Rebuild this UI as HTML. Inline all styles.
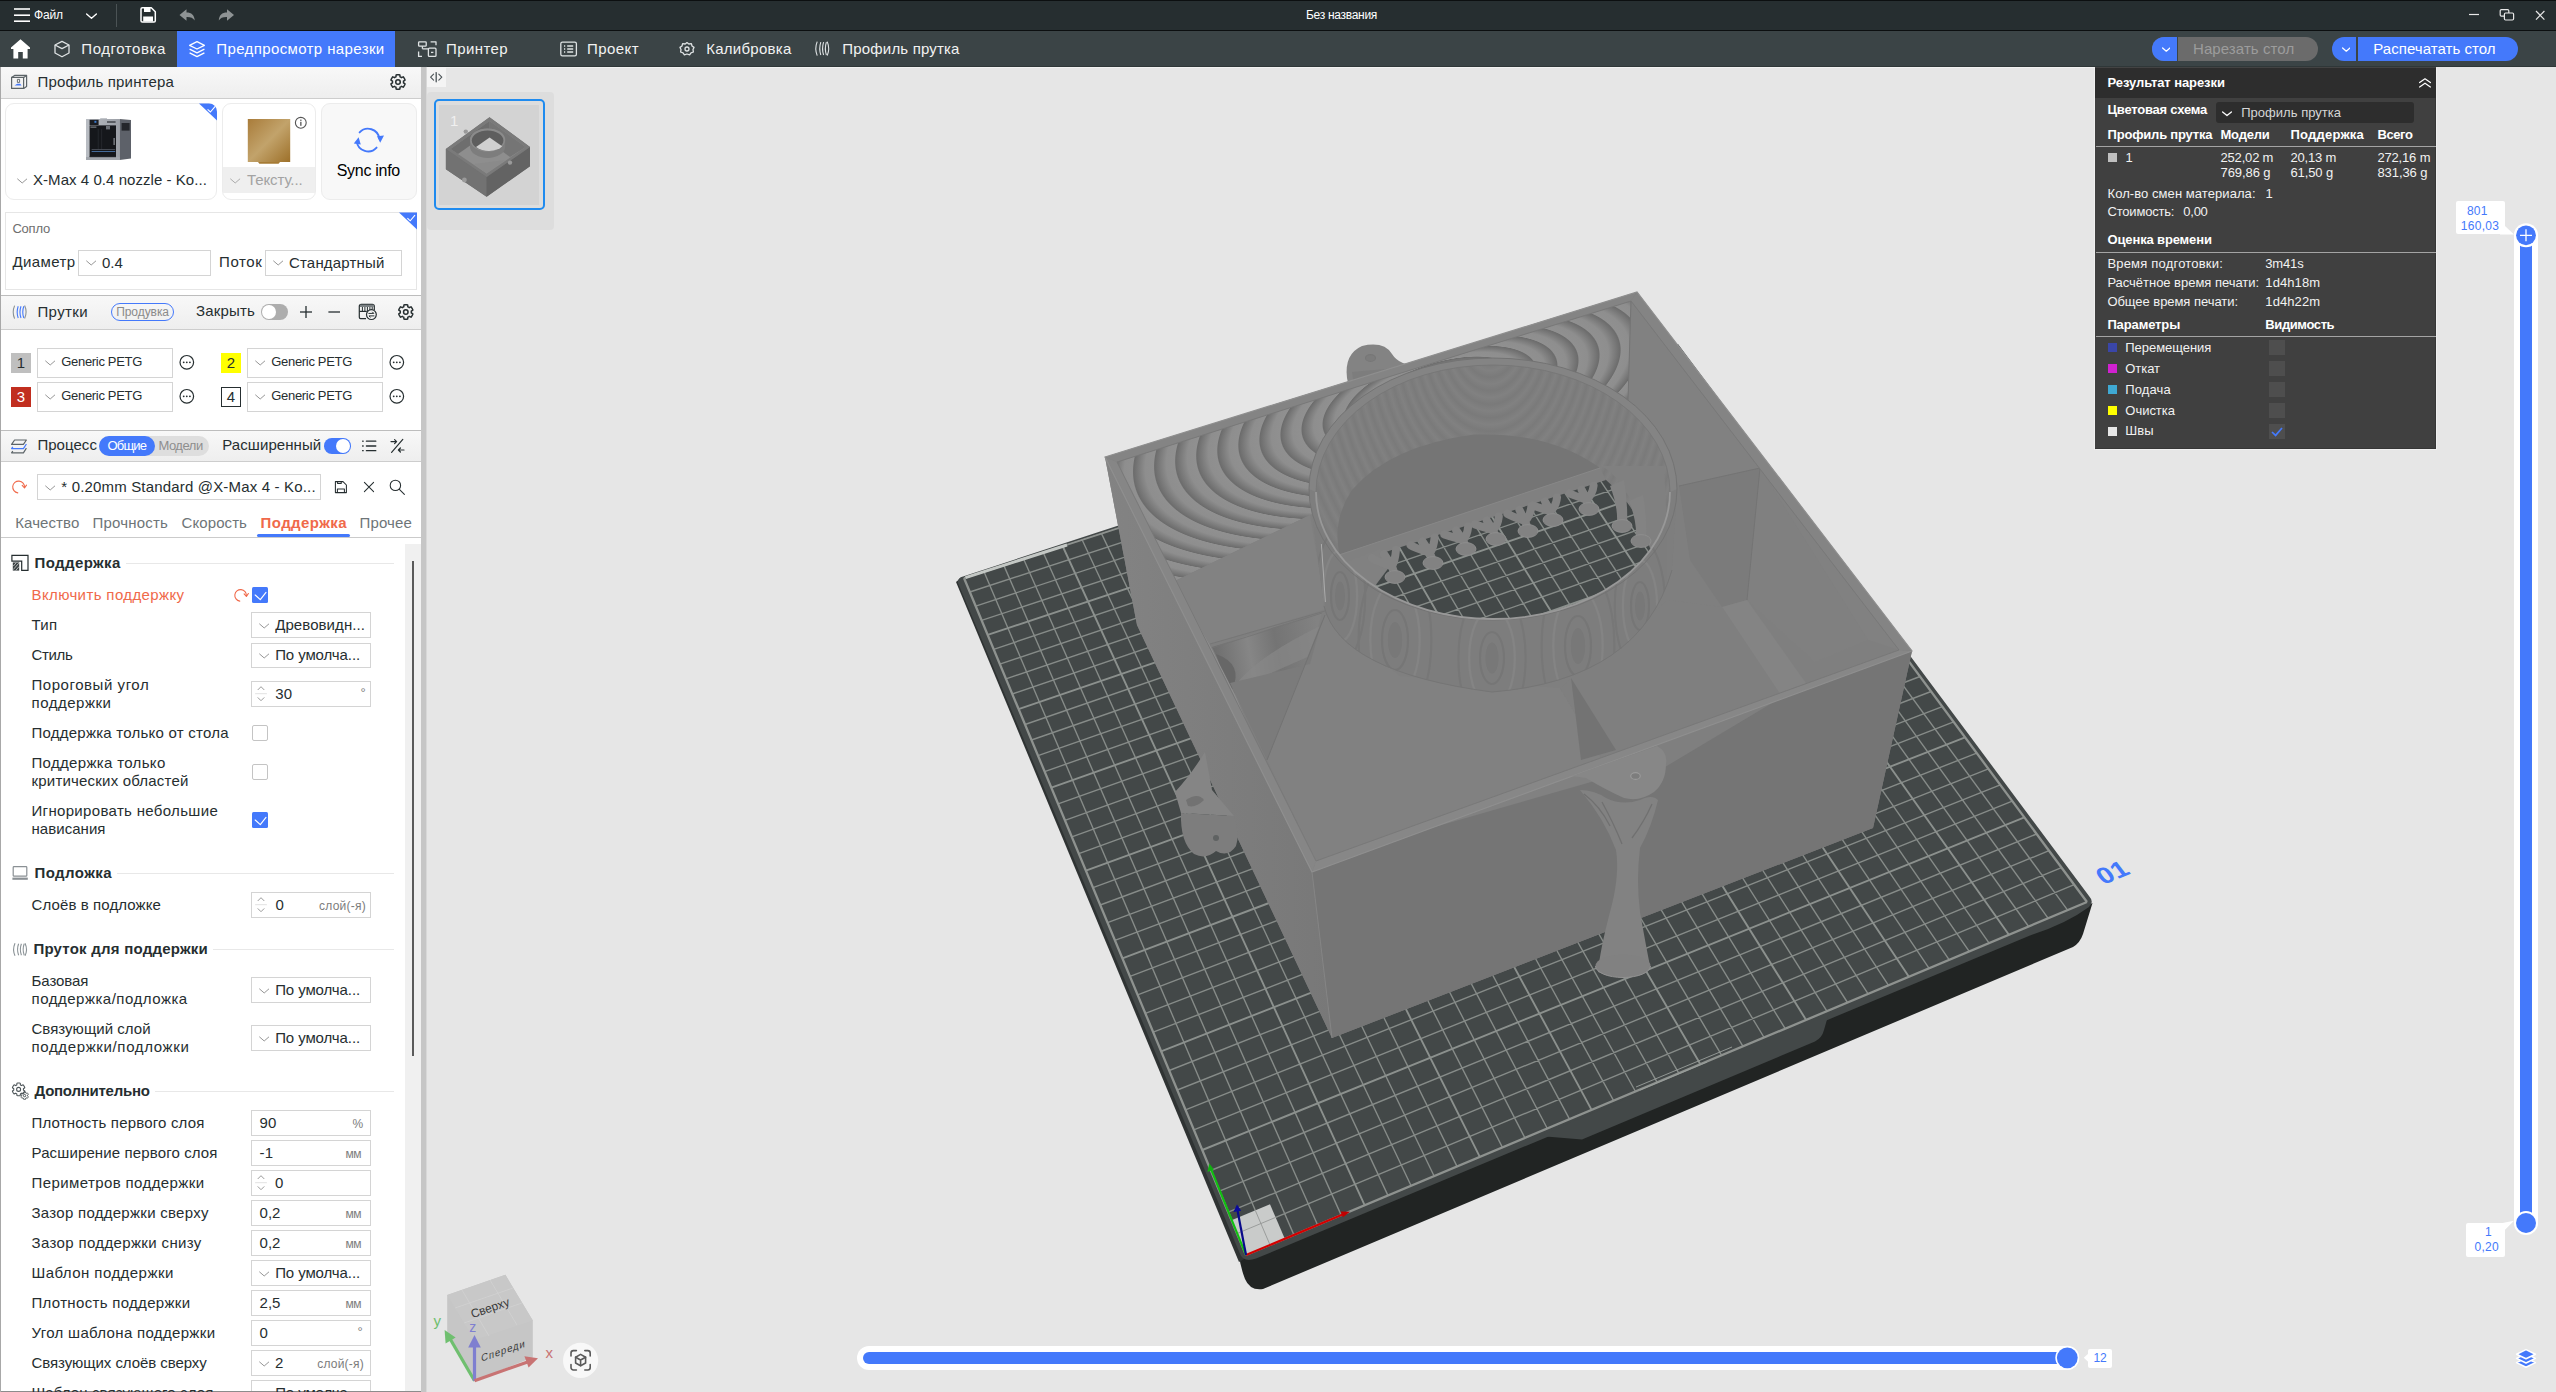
<!DOCTYPE html>
<html lang="ru"><head><meta charset="utf-8"><title>QIDI Studio</title><style>html,body{margin:0;padding:0}body{width:2556px;height:1392px;overflow:hidden;position:relative;background:#e6e6e6;font-family:"Liberation Sans",sans-serif}.a{position:absolute}.t{position:absolute;white-space:nowrap;line-height:1}</style></head><body>
<svg class="a" style="left:0;top:0" width="2556" height="1392" viewBox="0 0 2556 1392"><defs><clipPath id="holeclip"><ellipse cx="1493" cy="492" rx="177" ry="127"/></clipPath><clipPath id="bedclip"><polygon points="958.0,579.0 1241.0,1261.0 2094.0,903.0 1676.0,347.0"/></clipPath><radialGradient id="moire1" cx="0" cy="0" r="9.5" gradientUnits="userSpaceOnUse" spreadMethod="repeat" gradientTransform="translate(1440,395) rotate(-17) scale(2.3,0.95)"><stop offset="0" stop-color="#8e8e8e"/><stop offset="0.55" stop-color="#6c6c6c"/><stop offset="0.6" stop-color="#909090"/><stop offset="1" stop-color="#8e8e8e"/></radialGradient><radialGradient id="moire2" cx="0" cy="0" r="9" gradientUnits="userSpaceOnUse" spreadMethod="repeat" gradientTransform="translate(1490,330) scale(1.0,1.5)"><stop offset="0" stop-color="#848484" stop-opacity="0.5"/><stop offset="0.5" stop-color="#767676" stop-opacity="0.5"/><stop offset="1" stop-color="#848484" stop-opacity="0.5"/></radialGradient><linearGradient id="swirl" x1="1212" y1="660" x2="1320" y2="640" gradientUnits="userSpaceOnUse"><stop offset="0" stop-color="#6c6c6c"/><stop offset="0.35" stop-color="#868686"/><stop offset="0.6" stop-color="#747474"/><stop offset="1" stop-color="#828282"/></linearGradient><linearGradient id="leftface" x1="0" y1="0" x2="1" y2="0"><stop offset="0" stop-color="#838383"/><stop offset="1" stop-color="#787878"/></linearGradient></defs><path d="M1239,1254 Q1240,1266 1245,1279 Q1250,1291 1263,1289 L2073,947 Q2080,943 2083,934 L2092.5,903 L2030,934 Z" fill="#212423"/><path d="M956,582 L1239,1262 L1246,1258 L962,577 Z" fill="#2f3333"/><path d="M958,583 Q957,578 963,576.4 L1120,525 L1678.0,344.0 L2089,896 Q2094.5,902 2089,907 Q2066,924 2030,935.4 L1256,1258.6 Q1243,1263 1239.6,1253 Z" fill="#434848"/><path d="M1540,1136 L1582,1139.6 L1815,1041.4 Q1822,1038 1824,1030 L1828,1016 Q1830,1010 1838,1006 Z" fill="#434848"/><g clip-path="url(#bedclip)"><path d="M1270.0,1244.9L983.9,571.5M1237.0,1233.5L2074.2,884.7M1293.9,1234.9L1003.7,565.1M1228.2,1212.2L2061.5,867.6M1317.6,1225.0L1023.5,558.7M1219.4,1191.2L2049.0,850.7M1341.2,1215.1L1043.1,552.3M1210.8,1170.5L2036.6,834.0M1387.9,1195.4L1082.1,539.7M1193.8,1129.8L2012.3,801.1M1411.1,1185.7L1101.4,533.4M1185.5,1109.8L2000.3,784.9M1434.1,1176.0L1120.7,527.2M1177.3,1090.0L1988.4,768.9M1457.0,1166.4L1139.8,520.9M1169.2,1070.5L1976.7,753.1M1502.4,1147.4L1177.9,508.6M1153.2,1032.2L1953.7,721.9M1524.9,1137.9L1196.8,502.5M1145.4,1013.4L1942.3,706.6M1547.3,1128.5L1215.6,496.4M1137.6,994.8L1931.1,691.5M1569.5,1119.2L1234.4,490.3M1130.0,976.4L1920.0,676.5M1613.6,1100.7L1271.6,478.2M1114.9,940.3L1898.1,646.9M1635.5,1091.5L1290.0,472.2M1107.5,922.6L1887.3,632.4M1657.2,1082.4L1308.4,466.3M1100.2,905.0L1876.7,618.0M1678.9,1073.3L1326.7,460.3M1093.0,887.7L1866.2,603.8M1721.7,1055.3L1363.1,448.5M1078.8,853.6L1845.4,575.7M1743.0,1046.4L1381.2,442.7M1071.8,836.8L1835.2,561.9M1764.1,1037.5L1399.1,436.8M1064.9,820.3L1825.1,548.3M1785.2,1028.7L1417.0,431.0M1058.1,803.9L1815.0,534.8M1826.9,1011.2L1452.6,419.5M1044.6,771.6L1795.3,508.1M1847.5,1002.5L1470.2,413.8M1038.0,755.7L1785.6,495.0M1868.1,993.9L1487.8,408.1M1031.5,740.0L1776.0,482.0M1888.5,985.3L1505.3,402.4M1025.0,724.5L1766.4,469.1M1929.1,968.3L1540.0,391.1M1012.3,694.0L1747.6,443.7M1949.2,959.8L1557.3,385.5M1006.0,678.9L1738.4,431.2M1969.2,951.4L1574.5,379.9M999.8,664.1L1729.2,418.9M1989.1,943.1L1591.6,374.4M993.7,649.3L1720.1,406.6M2028.6,926.5L1625.6,363.4M981.6,620.4L1702.2,382.4M2048.2,918.3L1642.5,357.9M975.7,606.1L1693.4,370.5M2067.6,910.1L1659.3,352.4M969.8,592.0L1684.7,358.7" stroke="#868b88" stroke-width="1.4" fill="none"/><path d="M1364.6,1205.2L1062.6,546.0M1202.3,1150.0L2024.4,817.4M1479.8,1156.9L1158.9,514.8M1161.1,1051.3L1965.1,737.4M1591.6,1109.9L1253.0,484.2M1122.4,958.3L1909.0,661.6M1700.4,1064.3L1345.0,454.4M1085.9,870.6L1855.7,589.7M1806.1,1019.9L1434.8,425.2M1051.3,787.6L1805.1,521.4M1908.9,976.8L1522.7,396.7M1018.6,709.2L1757.0,456.4M2008.9,934.8L1608.6,368.9M987.7,634.8L1711.1,394.4" stroke="#8b908d" stroke-width="1.9" fill="none"/><path d="M1246.0,1255.0L964.0,578.0M1246.0,1255.0L2087.0,902.0M2087.0,902.0L1676.0,347.0M964.0,578.0L1676.0,347.0" stroke="#8e928f" stroke-width="2.3" fill="none"/></g><polygon points="1246.0,1255.0 1284.8,1238.7 1270.0,1204.3 1231.5,1220.3" fill="#c9cbca"/><path d="M1270.0,1244.9L1255.3,1210.4M1237.0,1233.5L1275.6,1217.4" stroke="#8e908f" stroke-width="0.8"/><path d="M965.5,577.6 L1067,545" stroke="#c4c8c5" stroke-width="3"/><path d="M1636,1087 L1732,1047 M1640,1090 L1707,1062" stroke="#9a9f9c" stroke-width="0.9" fill="none"/><line x1="1246" y1="1255" x2="1345" y2="1213.6" stroke="#d40000" stroke-width="2.2"/><polygon points="1350,1211.8 1340.6,1211.4 1343,1217.2" fill="#c00000"/><line x1="1246" y1="1255" x2="1210.6" y2="1168" stroke="#10c010" stroke-width="2"/><polygon points="1209.4,1163.6 1207.4,1172 1213.8,1169.6" fill="#10b010"/><line x1="1246" y1="1255" x2="1237.6" y2="1211" stroke="#0a0a8a" stroke-width="2.2"/><polygon points="1237,1204.6 1233.4,1212 1241.2,1210.8" fill="#0a0a9a"/><text x="0" y="0" font-family="Liberation Sans" font-size="25" font-weight="700" fill="#4479fb" transform="matrix(1.0 -0.42 0.6 0.8 2103.6 885)">01</text><polygon points="1105.0,457.0 1637.0,292.0 1912.0,651.0 1873.0,828.0 1332.0,1038.0 1137.0,625.0" fill="#7e7e7e"/><path d="M1347,378 Q1344,354 1362,346 Q1384,341 1392,354 Q1400,367 1424,366 L1450,372 L1352,402 Z" fill="#838383"/><path d="M1352,372 L1420,366 L1440,376 L1356,398 Z" fill="#777777" opacity="0.5"/><ellipse cx="1370.5" cy="358" rx="5" ry="3.4" fill="#7c7c7c" stroke="#777" stroke-width="1.1"/><polygon points="1105.0,457.0 1312.0,872.0 1332.0,1038.0 1137.0,625.0" fill="url(#leftface)"/><polygon points="1312.0,872.0 1912.0,651.0 1873.0,828.0 1332.0,1038.0" fill="#757575"/><polygon points="1117.0,462.0 1631.0,301.0 1899.0,650.0 1316.0,861.0" fill="#7f7f7f"/><polygon points="1117.0,462.0 1631.0,301.0 1628.0,400.0 1560.0,420.0 1310.0,515.0 1173.0,582.0" fill="#7d7d7d"/><polygon points="1117.0,462.0 1631.0,301.0 1628.0,400.0 1560.0,420.0 1310.0,515.0 1173.0,582.0" fill="url(#moire1)"/><polygon points="1173.0,582.0 1310.0,515.0 1326.0,609.0 1209.0,645.0" fill="#828282"/><polygon points="1212.0,647.0 1322.0,612.0 1308.0,664.0 1234.0,694.0" fill="url(#swirl)"/><path d="M1216,654 Q1244,664 1232,690 L1222,672 Z" fill="#676767"/><path d="M1232,690 Q1250,660 1322,625 L1312,655 Z" fill="#878787" opacity="0.7"/><path d="M1173,582 L1209,645 L1234,694 L1262,760 L1316,861" fill="none" stroke="#8e8e8e" stroke-width="1.4"/><path d="M1210,644 L1325,611 M1212,648 L1322,613" fill="none" stroke="#757575" stroke-width="0.9"/><polygon points="1631.0,301.0 1899.0,650.0 1868.0,640.0 1760.0,468.0 1679.0,486.0 1640.0,420.0 1628.0,400.0" fill="#818181"/><polygon points="1679.0,486.0 1760.0,468.0 1747.0,600.0 1722.0,607.0 1690.0,560.0" fill="#7b7b7b"/><polygon points="1760.0,468.0 1868.0,640.0 1815.0,662.0 1747.0,600.0" fill="#808080"/><polygon points="1722.0,607.0 1747.0,600.0 1808.0,686.0 1782.0,697.0" fill="#848484"/><path d="M1679,486 L1760,468 L1747,600 M1631,301 L1628,400" fill="none" stroke="#747474" stroke-width="1"/><polygon points="1325.0,615.0 1400.0,676.0 1560.0,688.0 1612.0,776.0 1316.0,861.0 1267.0,760.0" fill="#818181"/><polygon points="1230.0,683.0 1310.0,664.0 1322.0,620.0 1267.0,760.0" fill="#7b7b7b"/><path d="M1325,615 L1267,760" stroke="#737373" stroke-width="1" fill="none"/><polygon points="1560.0,688.0 1668.0,600.0 1722.0,607.0 1782.0,697.0 1640.0,782.0 1612.0,776.0" fill="#7f7f7f"/><polygon points="1571.0,678.0 1581.0,760.0 1616.0,750.0" fill="#737373"/><path d="M1309,489 L1324,606 Q1340,672 1492,692 Q1640,680 1672,570 L1677,489 Z" fill="#7e7e7e"/><ellipse cx="1493" cy="489" rx="184" ry="131" fill="#848484"/><ellipse cx="1493" cy="492" rx="177" ry="127" fill="#7e7e7e"/><g clip-path="url(#holeclip)"><ellipse cx="1493" cy="492" rx="177" ry="127" fill="url(#moire2)"/><path d="M1339.5,554.8 Q1332,520 1352,490 Q1390,446 1474,434.6 Q1550,432 1600,468 Z" fill="#757575"/><polygon points="1300,578 1347,563 1605,479 1622,495 1660,550 1700,560 1700,650 1300,650" fill="#434848"/></g><clipPath id="holebed" clip-path="url(#holeclip)"><polygon points="1300,578 1347,563 1605,479 1622,495 1660,550 1700,560 1700,650 1300,650"/></clipPath><g clip-path="url(#holebed)"><path d="M1270.0,1244.9L983.9,571.5M1237.0,1233.5L2074.2,884.7M1293.9,1234.9L1003.7,565.1M1228.2,1212.2L2061.5,867.6M1317.6,1225.0L1023.5,558.7M1219.4,1191.2L2049.0,850.7M1341.2,1215.1L1043.1,552.3M1210.8,1170.5L2036.6,834.0M1387.9,1195.4L1082.1,539.7M1193.8,1129.8L2012.3,801.1M1411.1,1185.7L1101.4,533.4M1185.5,1109.8L2000.3,784.9M1434.1,1176.0L1120.7,527.2M1177.3,1090.0L1988.4,768.9M1457.0,1166.4L1139.8,520.9M1169.2,1070.5L1976.7,753.1M1502.4,1147.4L1177.9,508.6M1153.2,1032.2L1953.7,721.9M1524.9,1137.9L1196.8,502.5M1145.4,1013.4L1942.3,706.6M1547.3,1128.5L1215.6,496.4M1137.6,994.8L1931.1,691.5M1569.5,1119.2L1234.4,490.3M1130.0,976.4L1920.0,676.5M1613.6,1100.7L1271.6,478.2M1114.9,940.3L1898.1,646.9M1635.5,1091.5L1290.0,472.2M1107.5,922.6L1887.3,632.4M1657.2,1082.4L1308.4,466.3M1100.2,905.0L1876.7,618.0M1678.9,1073.3L1326.7,460.3M1093.0,887.7L1866.2,603.8M1721.7,1055.3L1363.1,448.5M1078.8,853.6L1845.4,575.7M1743.0,1046.4L1381.2,442.7M1071.8,836.8L1835.2,561.9M1764.1,1037.5L1399.1,436.8M1064.9,820.3L1825.1,548.3M1785.2,1028.7L1417.0,431.0M1058.1,803.9L1815.0,534.8M1826.9,1011.2L1452.6,419.5M1044.6,771.6L1795.3,508.1M1847.5,1002.5L1470.2,413.8M1038.0,755.7L1785.6,495.0M1868.1,993.9L1487.8,408.1M1031.5,740.0L1776.0,482.0M1888.5,985.3L1505.3,402.4M1025.0,724.5L1766.4,469.1M1929.1,968.3L1540.0,391.1M1012.3,694.0L1747.6,443.7M1949.2,959.8L1557.3,385.5M1006.0,678.9L1738.4,431.2M1969.2,951.4L1574.5,379.9M999.8,664.1L1729.2,418.9M1989.1,943.1L1591.6,374.4M993.7,649.3L1720.1,406.6M2028.6,926.5L1625.6,363.4M981.6,620.4L1702.2,382.4M2048.2,918.3L1642.5,357.9M975.7,606.1L1693.4,370.5M2067.6,910.1L1659.3,352.4M969.8,592.0L1684.7,358.7" stroke="#868b88" stroke-width="1.4" fill="none"/><path d="M1364.6,1205.2L1062.6,546.0M1202.3,1150.0L2024.4,817.4M1479.8,1156.9L1158.9,514.8M1161.1,1051.3L1965.1,737.4M1591.6,1109.9L1253.0,484.2M1122.4,958.3L1909.0,661.6M1700.4,1064.3L1345.0,454.4M1085.9,870.6L1855.7,589.7M1806.1,1019.9L1434.8,425.2M1051.3,787.6L1805.1,521.4M1908.9,976.8L1522.7,396.7M1018.6,709.2L1757.0,456.4M2008.9,934.8L1608.6,368.9M987.7,634.8L1711.1,394.4" stroke="#8b908d" stroke-width="1.9" fill="none"/><path d="M1246.0,1255.0L964.0,578.0M1246.0,1255.0L2087.0,902.0M2087.0,902.0L1676.0,347.0M964.0,578.0L1676.0,347.0" stroke="#8e928f" stroke-width="2.3" fill="none"/></g><g clip-path="url(#holeclip)"><polygon points="1300,568 1339.5,554.8 1600,468 1606,480 1346,565 1300,582" fill="#808080"/><path d="M1339.5,554.8 L1600,468" stroke="#878787" stroke-width="1"/><path d="M1336,566 L1380,549 L1390,566 L1372,590 L1354,598 Z" fill="#818181"/><path d="M1395.0,575.0 L1392.0,566.2 M1392.0,566.2 Q1375.0,560.5 1372.0,557.9 M1392.0,566.2 Q1395.0,561.1 1396.0,550.0 M1392.0,566.2 L1384.0,554.0 M1433.0,561.0 L1430.0,552.8 M1430.0,552.8 Q1413.6,547.5 1410.6,545.3 M1430.0,552.8 Q1433.6,547.9 1434.6,537.5 M1430.0,552.8 L1422.6,541.4 M1466.0,547.0 L1463.0,540.1 M1463.0,540.1 Q1447.2,535.4 1444.2,534.4 M1463.0,540.1 Q1467.2,535.8 1468.2,526.5 M1463.0,540.1 L1456.2,530.4 M1496.0,537.0 L1493.0,530.1 M1493.0,530.1 Q1477.8,525.4 1474.8,524.4 M1493.0,530.1 Q1497.8,525.9 1498.8,516.6 M1493.0,530.1 L1486.8,520.5 M1528.0,529.0 L1525.0,521.0 M1525.0,521.0 Q1510.4,515.8 1507.4,513.8 M1525.0,521.0 Q1530.4,516.2 1531.4,506.0 M1525.0,521.0 L1519.4,509.9 M1553.0,518.0 L1550.0,511.1 M1550.0,511.1 Q1536.0,506.5 1533.0,505.4 M1550.0,511.1 Q1556.0,506.9 1557.0,497.6 M1550.0,511.1 L1545.0,501.5 M1589.0,507.0 L1586.0,499.7 M1586.0,499.7 Q1572.6,494.9 1569.6,493.5 M1586.0,499.7 Q1592.6,495.3 1593.6,485.7 M1586.0,499.7 L1581.6,489.6 " fill="none" stroke="#838383" stroke-width="8" stroke-linecap="round" stroke-linejoin="round"/><ellipse cx="1395.0" cy="577.0" rx="10" ry="6.4" fill="#828282" stroke="#8f8f8f" stroke-width="0.9"/><ellipse cx="1433.0" cy="563.0" rx="10" ry="6.4" fill="#828282" stroke="#8f8f8f" stroke-width="0.9"/><ellipse cx="1466.0" cy="549.0" rx="10" ry="6.4" fill="#828282" stroke="#8f8f8f" stroke-width="0.9"/><ellipse cx="1496.0" cy="539.0" rx="10" ry="6.4" fill="#828282" stroke="#8f8f8f" stroke-width="0.9"/><ellipse cx="1528.0" cy="531.0" rx="10" ry="6.4" fill="#828282" stroke="#8f8f8f" stroke-width="0.9"/><ellipse cx="1553.0" cy="520.0" rx="10" ry="6.4" fill="#828282" stroke="#8f8f8f" stroke-width="0.9"/><ellipse cx="1589.0" cy="509.0" rx="10" ry="6.4" fill="#828282" stroke="#8f8f8f" stroke-width="0.9"/><path d="M1600,466 Q1612,470 1622,486 Q1636,506 1640,522 L1650,548 L1668,548 L1664,466 Z" fill="#808080"/><path d="M1610,486 Q1618,506 1617,523 L1627,523 Q1628,502 1624,480 Z" fill="#838383"/><ellipse cx="1622" cy="526" rx="10" ry="6.4" fill="#828282" stroke="#8e8e8e" stroke-width="0.9"/><path d="M1629,501 Q1637,521 1636,538 L1646,538 Q1647,517 1643,495 Z" fill="#838383"/><ellipse cx="1641" cy="541" rx="10" ry="6.4" fill="#828282" stroke="#8e8e8e" stroke-width="0.9"/></g><path d="M1309,489 L1324,606 Q1340,672 1492,692 Q1640,680 1672,570 L1677,489 L1670,492 A177,127 0 0 1 1316,492 Z" fill="#7e7e7e"/><clipPath id="cylclip"><path d="M1309,489 L1324,606 Q1340,672 1492,692 Q1640,680 1672,570 L1677,489 L1670,492 A177,127 0 0 1 1316,492 Z"/></clipPath><g clip-path="url(#cylclip)" opacity="0.6"><ellipse cx="1395" cy="640" rx="13.0" ry="30.0" fill="none" stroke="#727272" stroke-width="2.2"/><ellipse cx="1395" cy="640" rx="24.7" ry="57.0" fill="none" stroke="#898989" stroke-width="2.2"/><ellipse cx="1395" cy="640" rx="36.4" ry="84.0" fill="none" stroke="#747474" stroke-width="2.2"/><ellipse cx="1395" cy="640" rx="7.2" ry="18.0" fill="#757575"/><ellipse cx="1492" cy="658" rx="12.0" ry="26.0" fill="none" stroke="#727272" stroke-width="2.2"/><ellipse cx="1492" cy="658" rx="22.8" ry="49.4" fill="none" stroke="#898989" stroke-width="2.2"/><ellipse cx="1492" cy="658" rx="33.6" ry="72.8" fill="none" stroke="#747474" stroke-width="2.2"/><ellipse cx="1492" cy="658" rx="6.6" ry="15.6" fill="#757575"/><ellipse cx="1578" cy="646" rx="13.0" ry="30.0" fill="none" stroke="#727272" stroke-width="2.2"/><ellipse cx="1578" cy="646" rx="24.7" ry="57.0" fill="none" stroke="#898989" stroke-width="2.2"/><ellipse cx="1578" cy="646" rx="36.4" ry="84.0" fill="none" stroke="#747474" stroke-width="2.2"/><ellipse cx="1578" cy="646" rx="7.2" ry="18.0" fill="#757575"/><ellipse cx="1340" cy="596" rx="9.0" ry="24.0" fill="none" stroke="#727272" stroke-width="2.2"/><ellipse cx="1340" cy="596" rx="17.1" ry="45.6" fill="none" stroke="#898989" stroke-width="2.2"/><ellipse cx="1340" cy="596" rx="25.2" ry="67.2" fill="none" stroke="#747474" stroke-width="2.2"/><ellipse cx="1340" cy="596" rx="5.0" ry="14.4" fill="#757575"/><ellipse cx="1640" cy="606" rx="9.0" ry="24.0" fill="none" stroke="#727272" stroke-width="2.2"/><ellipse cx="1640" cy="606" rx="17.1" ry="45.6" fill="none" stroke="#898989" stroke-width="2.2"/><ellipse cx="1640" cy="606" rx="25.2" ry="67.2" fill="none" stroke="#747474" stroke-width="2.2"/><ellipse cx="1640" cy="606" rx="5.0" ry="14.4" fill="#757575"/></g><ellipse cx="1493" cy="489" rx="184" ry="131" fill="none" stroke="#737373" stroke-width="1"/><path d="M1316,492 A177,127 0 0 0 1670,492" fill="none" stroke="#989898" stroke-width="1.8"/><path d="M1316,492 A177,127 0 0 1 1670,492" fill="none" stroke="#767676" stroke-width="0.9"/><path d="M1324,606 Q1340,672 1492,692 Q1640,680 1672,570" fill="none" stroke="#757575" stroke-width="1"/><path d="M1321.4,544 L1325.4,602" stroke="#acacac" stroke-width="1"/><polygon points="1312.0,872.0 1912.0,651.0 1899.0,650.0 1316.0,861.0" fill="#878787"/><polygon points="1105.0,457.0 1312.0,872.0 1316.0,861.0 1117.0,462.0" fill="#868686"/><polygon points="1105.0,457.0 1637.0,292.0 1631.0,301.0 1117.0,462.0" fill="#848484"/><polygon points="1637.0,292.0 1912.0,651.0 1899.0,650.0 1631.0,301.0" fill="#848484"/><polygon points="1105.0,457.0 1637.0,292.0 1912.0,651.0 1312.0,872.0" fill="none" stroke="#8f8f8f" stroke-width="1.2"/><polygon points="1117.0,462.0 1631.0,301.0 1899.0,650.0 1316.0,861.0" fill="none" stroke="#777777" stroke-width="0.9"/><path d="M1312,872 L1332,1038" stroke="#858585" stroke-width="1"/><path d="M1572,776 L1657,746 Q1668,752 1666,764 Q1666,782 1654,792 Q1640,802 1624,798 Q1606,790 1586,778 Z" fill="#878787"/><ellipse cx="1635.5" cy="776" rx="4.8" ry="3.4" fill="#7d7d7d" stroke="#9c9c9c" stroke-width="1.1"/><path d="M1580,790 Q1594,790 1606,798 Q1622,806 1640,800 Q1652,794 1658,800 Q1652,826 1640,848 Q1636,880 1640,912 Q1646,946 1650,966 Q1632,984 1598,972 Q1600,950 1610,912 Q1620,876 1616,850 Q1604,818 1580,790 Z" fill="#828282"/><path d="M1584,794 Q1600,806 1610,826 M1652,804 Q1644,822 1632,838 M1602,802 Q1614,824 1622,844" stroke="#707070" stroke-width="1.3" fill="none"/><ellipse cx="1623" cy="966" rx="27.5" ry="11.5" fill="#818181"/><path d="M1595.5,966 A27.5,11.5 0 0 0 1650.5,966" fill="none" stroke="#929292" stroke-width="1"/><path d="M1175,792 Q1190,776 1205,752 L1212,790 L1234,816 L1181,813 Z" fill="#858585"/><path d="M1181,813 L1234,816 Q1240,834 1236,846 Q1228,858 1216,851 Q1206,860 1194,854 Q1180,842 1181,813 Z" fill="#7d7d7d"/><path d="M1186,800 Q1198,792 1204,800 Q1196,808 1188,806 Z" fill="#727272"/><circle cx="1216" cy="838" r="3" fill="#5f6262"/></svg>
<div class="a" style="left:2095px;top:67px;width:341px;height:382px;background:#404040;box-shadow:inset -1px -1px 0 #363636,1px 1px 0 #efefef;"></div><div class="a" style="left:2095px;top:67px;width:341px;height:31px;background:#2d2d2d;"></div><div class="a" style="left:2095px;top:67px;width:341px;height:1px;background:#434343;"></div><div class="a" style="left:427px;top:67px;width:1667px;height:1px;background:#f1f1f1;"></div><div class="a" style="left:2094px;top:67px;width:1px;height:383px;background:#efefef;"></div><svg class="a" style="left:0;top:0;overflow:visible;" width="1" height="1"><g fill="none" stroke="#fff" stroke-width="1.2" stroke-linecap="round" stroke-linejoin="round"><polyline points="2419.6,82.6 2425,78.8 2430.4,82.6"/><polyline points="2419.6,87 2425,83.2 2430.4,87"/></g></svg><div class="a" style="left:2216px;top:102.2px;width:198px;height:20.6px;background:#2d2d2d;border-radius:3px;"></div><svg class="a" style="left:2222.4px;top:111px" width="10" height="6" viewBox="0 0 10 6"><polyline points="0.6,1 5.0,4.6 9.4,1" fill="none" stroke="#fff" stroke-width="1.3" stroke-linecap="round" stroke-linejoin="round"/></svg><div class="a" style="left:2096px;top:146px;width:340px;height:1px;background:#a4a4a4;"></div><div class="a" style="left:2108px;top:153px;width:9px;height:9px;background:#c0c0c0;"></div><div class="a" style="left:2096px;top:252px;width:340px;height:1px;background:#a4a4a4;"></div><div class="a" style="left:2096px;top:336px;width:340px;height:1px;background:#a4a4a4;"></div><div class="a" style="left:2108px;top:343.09999999999997px;width:9px;height:9px;background:#3a46a8;"></div><div class="a" style="left:2269.4px;top:340.09999999999997px;width:15.2px;height:15.2px;background:#4e4e4e;"></div><div class="a" style="left:2108px;top:364.03px;width:9px;height:9px;background:#d121d1;"></div><div class="a" style="left:2269.4px;top:361.03px;width:15.2px;height:15.2px;background:#4e4e4e;"></div><div class="a" style="left:2108px;top:384.96px;width:9px;height:9px;background:#3fa9d3;"></div><div class="a" style="left:2269.4px;top:381.96px;width:15.2px;height:15.2px;background:#4e4e4e;"></div><div class="a" style="left:2108px;top:405.89px;width:9px;height:9px;background:#ffff00;"></div><div class="a" style="left:2269.4px;top:402.89px;width:15.2px;height:15.2px;background:#4e4e4e;"></div><div class="a" style="left:2108px;top:426.81999999999994px;width:9px;height:9px;background:#e6e6e6;"></div><div class="a" style="left:2269.4px;top:423.81999999999994px;width:15.2px;height:15.2px;background:#4e4e4e;"></div><svg class="a" style="left:0;top:0;overflow:visible;" width="1" height="1"><polyline points="2272,432.0 2275.6,435.4 2282,428.0" fill="none" stroke="#4479fb" stroke-width="1.7" stroke-linejoin="miter"/></svg><div class="a" style="left:2514px;top:224px;width:24px;height:1010px;background:#fff;border-radius:12px;"></div><div class="a" style="left:2520px;top:236px;width:12px;height:986px;background:#4479fb;"></div><svg class="a" style="left:0;top:0;overflow:visible;" width="1" height="1"><circle cx="2526" cy="235.3" r="12" fill="#fff"/><circle cx="2526" cy="235.3" r="9.9" fill="#4479fb"/><path d="M2520,235.3 h12 M2526,229.3 v12" stroke="#fff" stroke-width="1.3"/></svg><svg class="a" style="left:0;top:0;overflow:visible;" width="1" height="1"><circle cx="2526" cy="1223" r="12" fill="#fff"/><circle cx="2526" cy="1223" r="10" fill="#4479fb"/></svg><div class="a" style="left:2456px;top:201px;width:49px;height:33.4px;background:#fff;border-radius:2px;"></div><svg class="a" style="left:0;top:0;overflow:visible;" width="1" height="1"><path d="M2500,226 h5 l9,8.4 h-14z" fill="#fff"/></svg><div class="a" style="left:2466px;top:1223.4px;width:39px;height:33.2px;background:#fff;border-radius:2px;"></div><svg class="a" style="left:0;top:0;overflow:visible;" width="1" height="1"><path d="M2500,1223.4 l14,-2.6 l-9,9z" fill="#fff"/></svg><svg class="a" style="left:0;top:0;overflow:visible;" width="1" height="1"><g stroke="#fff" stroke-width="1.6" stroke-linejoin="round" fill="#4479fb"><path d="M2526,1358 l9.4,4.6 l-9.4,4.6 l-9.4,-4.6z"/><path d="M2526,1353.8 l9.4,4.6 l-9.4,4.6 l-9.4,-4.6z"/><path d="M2526,1349.6 l9.4,4.6 l-9.4,4.6 l-9.4,-4.6z"/></g></svg><div class="a" style="left:857px;top:1346px;width:1222px;height:24px;background:#fff;border-radius:12px;"></div><div class="a" style="left:863px;top:1352.2px;width:1205px;height:11.8px;background:#4479fb;border-radius:6px;"></div><svg class="a" style="left:0;top:0;overflow:visible;" width="1" height="1"><circle cx="2067.3" cy="1357.8" r="12" fill="#fff"/><circle cx="2067.3" cy="1357.8" r="10.4" fill="#4479fb"/></svg><div class="a" style="left:2088px;top:1349px;width:24.4px;height:19px;background:#fff;border-radius:2px;"></div><svg class="a" style="left:0;top:0;overflow:visible;" width="1" height="1"><path d="M2088.4,1353.6 l-4.6,4.2 l4.6,4.2z" fill="#fff"/></svg><svg class="a" style="left:0;top:0;overflow:visible;" width="1" height="1"><circle cx="580.6" cy="1360.4" r="17.6" fill="#f8f8f8"/><g fill="none" stroke="#5a5a5a" stroke-width="1.6" stroke-linecap="round" stroke-linejoin="round"><path d="M571,1356 v-3 a2.4,2.4 0 0 1 2.4,-2.4 h3"/><path d="M590.2,1356 v-3 a2.4,2.4 0 0 0 -2.4,-2.4 h-3"/><path d="M571,1364.6 v3 a2.4,2.4 0 0 0 2.4,2.4 h3"/><path d="M590.2,1364.6 v3 a2.4,2.4 0 0 1 -2.4,2.4 h-3"/><path d="M580.6,1354.4 l5,2.8 v5.8 l-5,2.8 l-5,-2.8 v-5.8z"/><path d="M575.6,1357.2 l5,2.8 l5,-2.8 M580.6,1360 v5.8"/></g></svg><svg class="a" style="left:0;top:0;overflow:visible;" width="1" height="1"><polygon points="447.2,1295 505.4,1274.8 532.8,1320.4 532.8,1357.4 474.5,1380.8 447.2,1333" fill="#c6c6c6"/><polygon points="447.2,1295 505.4,1274.8 532.8,1320.4 474.5,1340" fill="#c8c8c8"/><g stroke="#d2d2d2" stroke-width="0.8" fill="none"><path d="M462,1290 l27,46 M490,1280 l27,45 M455,1308 l58,-20 M464,1323 l58,-20"/></g><g stroke-width="3.2" fill="none"><line x1="474.5" y1="1380.8" x2="449" y2="1337" stroke="#6fbf6f"/><line x1="474.5" y1="1380.8" x2="474.5" y2="1346" stroke="#7f7fd0"/><line x1="474.5" y1="1380.8" x2="529" y2="1361.4" stroke="#c87373"/></g><polygon points="444.6,1330 455.6,1337.6 445.6,1343.4" fill="#6fbf6f"/><polygon points="474.5,1335 480.8,1347.6 468.2,1347.6" fill="#7f7fd0"/><polygon points="538,1358.2 528.6,1367.4 524.4,1356.2" fill="#c87373"/></svg><div class="a" style="left:426px;top:67px;width:20px;height:20px;background:#f4f4f4;"></div><svg class="a" style="left:0;top:0;overflow:visible;" width="1" height="1"><g fill="none" stroke="#4a5256" stroke-width="1.1" stroke-linecap="round" stroke-linejoin="round"><polyline points="433.6,74.2 430.6,77.2 433.6,80.2"/><polyline points="438.8,74.2 441.8,77.2 438.8,80.2"/><line x1="436.2" y1="72.6" x2="436.2" y2="81.8" stroke-width="1.3"/></g></svg><div class="a" style="left:427px;top:92px;width:127px;height:138px;background:#dddddd;border-radius:4px;"></div><div class="a" style="left:439px;top:105px;width:100px;height:100px;background:#d3d3d3;"></div><div class="a" style="left:433.6px;top:99.4px;width:111px;height:111px;box-sizing:border-box;border:2px solid #1f8bef;border-radius:5px;"></div><svg class="a" style="left:0;top:0;overflow:visible;" width="1" height="1"><polygon points="489.5,117.3 530,147 530,166.3 486.6,196.8 445.9,169.3 445.9,149" fill="#6c6c6c"/><polygon points="445.9,149 486.6,177 486.6,196.8 445.9,169.3" fill="#727272"/><polygon points="486.6,177 530,147 530,166.3 486.6,196.8" fill="#636363"/><polygon points="489.5,117.3 530,147 486.6,177 445.9,149" fill="#7a7a7a"/><polygon points="489.5,121 525.6,147 486.6,173.6 450.6,149" fill="#8e8e8e"/><polygon points="489.5,121 525.6,147 510,157 489.5,142" fill="#757575"/><polygon points="489.5,121 450.6,149 458,154 489.5,132" fill="#6e6e6e"/><polygon points="474,164 505,160 486.6,173.6" fill="#8a8a8a"/><path d="M470,140 a17.6,11.6 0 0 1 35.2,0 v6.4 a17.6,11.6 0 0 1 -35.2,0z" fill="#7d7d7d"/><ellipse cx="487.6" cy="140" rx="17.6" ry="11.6" fill="#8b8b8b"/><ellipse cx="487.6" cy="140.6" rx="15.8" ry="10" fill="#5e5e5e"/><path d="M476,147 l13.6,-9.4 l12.6,8.6 a15.8,10 0 0 1 -26.2,0.8z" fill="#d0d0d0"/><g fill="#9a9a9a"><circle cx="465.8" cy="131.6" r="2.2"/><circle cx="510" cy="162.6" r="2.2"/><circle cx="464.4" cy="180" r="2.4"/></g></svg>
<div class="a" style="left:0px;top:67px;width:421px;height:1325px;background:#fff;"></div><div class="a" style="left:421px;top:67px;width:6px;height:1325px;background:#c6c6c6;"></div><div class="a" style="left:426px;top:67px;width:1px;height:1325px;background:#d8d8d8;"></div><div class="a" style="left:0px;top:67px;width:421px;height:31px;background:linear-gradient(#f8f8f8,#eeeeee);"></div><div class="a" style="left:0px;top:98px;width:421px;height:1px;background:#cdcdcd;"></div><svg class="a" style="left:0;top:0;overflow:visible;" width="1" height="1"><g fill="none" stroke="#5c6468" stroke-width="1.2" stroke-linejoin="round"><path d="M11.6,77.4 h12 v11 h-12z"/><path d="M11.6,77.4 l3,-2 h12 v11 l-3,2"/><path d="M23.6,77.4 l3,-2"/></g><path d="M14.6,85.6 h7 l-1.4,-1.8 h-3z" fill="#4479fb"/><path d="M17.4,79.4 h2.2 v3 h-2.2z" fill="none" stroke="#5c6468" stroke-width="0.9"/></svg><svg class="a" style="left:0;top:0;overflow:visible" width="1" height="1"><path d="M396.11,74.95 L397.05,74.76 L398.00,74.70 L398.95,74.76 L399.89,74.95 L400.04,76.84 L400.77,77.20 L401.45,77.65 L403.16,76.84 L403.79,77.56 L404.32,78.35 L404.74,79.21 L405.05,80.11 L403.49,81.19 L403.55,82.00 L403.49,82.81 L405.05,83.89 L404.74,84.79 L404.32,85.65 L403.79,86.44 L403.16,87.16 L401.45,86.35 L400.77,86.80 L400.04,87.16 L399.89,89.05 L398.95,89.24 L398.00,89.30 L397.05,89.24 L396.11,89.05 L395.96,87.16 L395.23,86.80 L394.55,86.35 L392.84,87.16 L392.21,86.44 L391.68,85.65 L391.26,84.79 L390.95,83.89 L392.51,82.81 L392.45,82.00 L392.51,81.19 L390.95,80.11 L391.26,79.21 L391.68,78.35 L392.21,77.56 L392.84,76.84 L394.55,77.65 L395.23,77.20 L395.96,76.84Z" fill="none" stroke="#262e30" stroke-width="1.5" stroke-linejoin="round"/><circle cx="398" cy="82" r="2.26" fill="none" stroke="#262e30" stroke-width="1.5"/></svg><div class="a" style="left:5px;top:103px;width:212px;height:97px;box-sizing:border-box;border:1px solid #ececec;border-radius:9px;background:#fff;overflow:hidden;"></div><svg class="a" style="left:0;top:0;overflow:visible;" width="1" height="1"><path d="M199,103.5 h10 a8,8 0 0 1 8,8 v9z" fill="#4479fb"/><polyline points="207.6,109.4 210.4,112 215.2,106.4" fill="none" stroke="#fff" stroke-width="1.1"/></svg><svg class="a" style="left:0;top:0;overflow:visible;" width="1" height="1"><defs><linearGradient id="pfr" x1="0" y1="0" x2="1" y2="0"><stop offset="0" stop-color="#b9bdc3"/><stop offset="1" stop-color="#9a9ea5"/></linearGradient></defs><g><rect x="100.2" y="118" width="6.8" height="1.6" fill="#c3c6cb"/><rect x="86" y="119" width="33.6" height="41" fill="url(#pfr)"/><polygon points="119.6,119 131,120 131,158.6 119.6,160" fill="#5d6169"/><rect x="121.6" y="123" width="8" height="7.6" fill="#24262b"/><rect x="89.6" y="125.4" width="26.4" height="31.6" fill="#15171b"/><rect x="89.6" y="119.8" width="9" height="5.2" fill="#1b1d22"/><rect x="94.4" y="120.8" width="2" height="2" fill="#3a7bd0"/><rect x="107" y="121.4" width="8.6" height="1.2" fill="#2a2d33"/><rect x="90.4" y="126.6" width="6" height="1" fill="#8f939a"/><rect x="106" y="126" width="4" height="3.4" fill="#6c7077"/><rect x="97.8" y="129" width="0.7" height="21" fill="#2b2e34"/><rect x="101.4" y="129" width="0.7" height="21" fill="#2b2e34"/><rect x="113.6" y="138" width="1" height="7" fill="#a4a8ae"/><rect x="91.6" y="149" width="23.6" height="0.9" fill="#4b5058"/><rect x="91.6" y="151" width="23.6" height="0.9" fill="#4a74a8"/><rect x="86" y="157" width="33.6" height="3" fill="#a2a6ac"/><rect x="89.6" y="156.4" width="26.4" height="0.8" fill="#23262b"/></g></svg><svg class="a" style="left:16.6px;top:178px" width="10.4" height="6.4" viewBox="0 0 10.4 6.4"><polyline points="0.6,1 5.2,5.0 9.8,1" fill="none" stroke="#969696" stroke-width="1.0" stroke-linecap="round" stroke-linejoin="round"/></svg><div class="a" style="left:222px;top:103px;width:94px;height:97px;box-sizing:border-box;border:1px solid #ececec;border-radius:9px;background:#fff;"></div><svg class="a" style="left:0;top:0;overflow:visible;" width="1" height="1"><defs><linearGradient id="gold" x1="0" y1="0" x2="1" y2="1"><stop offset="0" stop-color="#a97c3a"/><stop offset="0.5" stop-color="#c2a36b"/><stop offset="1" stop-color="#9d7029"/></linearGradient></defs><rect x="247.8" y="119" width="42.4" height="43" fill="url(#gold)"/><path d="M258,162 h22 l-1.4,1.8 h-19.2z" fill="#a67b35"/></svg><svg class="a" style="left:0;top:0;overflow:visible;" width="1" height="1"><circle cx="300.8" cy="122.8" r="5.4" fill="#fff" stroke="#555" stroke-width="1.1"/><rect x="300.2" y="121.8" width="1.3" height="4" fill="#555"/><rect x="300.2" y="119.6" width="1.3" height="1.3" fill="#555"/></svg><div class="a" style="left:223px;top:167px;width:92px;height:26px;background:#efefef;"></div><svg class="a" style="left:230.4px;top:178px" width="10.4" height="6.4" viewBox="0 0 10.4 6.4"><polyline points="0.6,1 5.2,5.0 9.8,1" fill="none" stroke="#ababab" stroke-width="1.0" stroke-linecap="round" stroke-linejoin="round"/></svg><div class="a" style="left:321px;top:103px;width:96px;height:97px;box-sizing:border-box;border:1px solid #ececec;border-radius:9px;background:#f8f8f8;"></div><svg class="a" style="left:0;top:0;overflow:visible;" width="1" height="1"><g fill="none" stroke="#4479fb" stroke-width="1.9" stroke-linecap="round"><path d="M359.6,132.4 A11.4,11.4 0 0 1 379.3,138.6"/><path d="M376.6,147.6 A11.4,11.4 0 0 1 356.8,141.6"/></g><path d="M380.2,142.8 L377,136.2 L384,135.4 Z" fill="#4479fb"/><path d="M358.6,137.2 L353.8,143.6 L360.8,144.4 Z" fill="#4479fb"/></svg><div class="a" style="left:5px;top:212px;width:412px;height:78px;box-sizing:border-box;border:1px solid #e6e6e6;background:#fff;"></div><svg class="a" style="left:0;top:0;overflow:visible;" width="1" height="1"><path d="M399,212.5 h18 v17z" fill="#4479fb"/><polyline points="407.4,218.2 410.2,220.8 415,215.2" fill="none" stroke="#fff" stroke-width="1.1"/></svg><div class="a" style="left:78px;top:250px;width:133px;height:26px;box-sizing:border-box;border:1px solid #d4d4d4;background:#fff;"></div><svg class="a" style="left:86px;top:260.4px" width="10.4" height="6.4" viewBox="0 0 10.4 6.4"><polyline points="0.6,1 5.2,5.0 9.8,1" fill="none" stroke="#969696" stroke-width="1.0" stroke-linecap="round" stroke-linejoin="round"/></svg><div class="a" style="left:265px;top:250px;width:137px;height:26px;box-sizing:border-box;border:1px solid #d4d4d4;background:#fff;"></div><svg class="a" style="left:272.6px;top:260.4px" width="10.4" height="6.4" viewBox="0 0 10.4 6.4"><polyline points="0.6,1 5.2,5.0 9.8,1" fill="none" stroke="#969696" stroke-width="1.0" stroke-linecap="round" stroke-linejoin="round"/></svg><div class="a" style="left:0px;top:295px;width:421px;height:1px;background:#bdbdbd;"></div><div class="a" style="left:0px;top:296px;width:421px;height:33px;background:linear-gradient(#f8f8f8,#eeeeee);"></div><div class="a" style="left:0px;top:329px;width:421px;height:1px;background:#cdcdcd;"></div><svg class="a" style="left:0;top:0;overflow:visible;" width="1" height="1"><path d="M14.600000000000001,305.6 Q11.8,312.1 14.600000000000001,318.6" fill="none" stroke="#8a9296" stroke-width="1.1"/><path d="M18.2,306.20000000000005 Q16.1,312.1 18.2,318.0" fill="none" stroke="#4479fb" stroke-width="1.1"/><path d="M21.0,306.20000000000005 Q18.900000000000002,312.1 21.0,318.0" fill="none" stroke="#4479fb" stroke-width="1.1"/><path d="M23.8,306.20000000000005 Q21.700000000000003,312.1 23.8,318.0" fill="none" stroke="#4479fb" stroke-width="1.1"/><path d="M24.6,305.6 Q27.6,312.1 24.6,318.6" fill="none" stroke="#8a9296" stroke-width="1.1"/></svg><div class="a" style="left:111px;top:303px;width:63px;height:18.4px;box-sizing:border-box;border:1.3px solid #4479fb;border-radius:9.2px;"></div><div class="a" style="left:261px;top:304px;width:27px;height:15.8px;border-radius:7.9px;background:#adadad;"></div><div class="a" style="left:262px;top:305px;width:13.8px;height:13.8px;border-radius:50%;background:#fff;"></div><svg class="a" style="left:0;top:0;overflow:visible;" width="1" height="1"><g stroke="#262e30" stroke-width="1.3"><line x1="300" y1="312" x2="312" y2="312"/><line x1="306" y1="306" x2="306" y2="318"/><line x1="328.4" y1="312" x2="340" y2="312"/></g></svg><svg class="a" style="left:0;top:0;overflow:visible;" width="1" height="1"><g fill="none" stroke="#262e30" stroke-width="1.2" stroke-linejoin="round"><path d="M366,318.6 h-5.4 a1.3,1.3 0 0 1 -1.3,-1.3 v-11 a2,2 0 0 1 2,-2 h11 a2,2 0 0 1 2,2 v3.6"/><path d="M359.4,311.4 h7.4"/></g><rect x="360" y="304.6" width="13.8" height="2.4" fill="#7a8083"/><g stroke="#262e30" stroke-width="1"><path d="M362.4,307 v4 M364.9,307 v4 M367.4,307 v4 M369.9,307 v3 M372.2,307 v2.6"/></g><circle cx="371.4" cy="314.6" r="4.9" fill="#f6f6f6" stroke="#262e30" stroke-width="1.2"/><g fill="none" stroke="#262e30" stroke-width="1" stroke-linecap="round" stroke-linejoin="round"><path d="M368.8,313.4 h5 l-1.3,-1.3 M374,315.9 h-5 l1.3,1.3"/></g></svg><svg class="a" style="left:0;top:0;overflow:visible" width="1" height="1"><path d="M403.91,304.95 L404.85,304.76 L405.80,304.70 L406.75,304.76 L407.69,304.95 L407.84,306.84 L408.57,307.20 L409.25,307.65 L410.96,306.84 L411.59,307.56 L412.12,308.35 L412.54,309.21 L412.85,310.11 L411.29,311.19 L411.35,312.00 L411.29,312.81 L412.85,313.89 L412.54,314.79 L412.12,315.65 L411.59,316.44 L410.96,317.16 L409.25,316.35 L408.57,316.80 L407.84,317.16 L407.69,319.05 L406.75,319.24 L405.80,319.30 L404.85,319.24 L403.91,319.05 L403.76,317.16 L403.03,316.80 L402.35,316.35 L400.64,317.16 L400.01,316.44 L399.48,315.65 L399.06,314.79 L398.75,313.89 L400.31,312.81 L400.25,312.00 L400.31,311.19 L398.75,310.11 L399.06,309.21 L399.48,308.35 L400.01,307.56 L400.64,306.84 L402.35,307.65 L403.03,307.20 L403.76,306.84Z" fill="none" stroke="#262e30" stroke-width="1.5" stroke-linejoin="round"/><circle cx="405.8" cy="312" r="2.26" fill="none" stroke="#262e30" stroke-width="1.5"/></svg><div class="a" style="left:11px;top:353px;width:20px;height:20px;background:#bfbfbf;"></div><div class="a" style="left:37px;top:348px;width:136px;height:30px;box-sizing:border-box;border:1px solid #d4d4d4;background:#fff;"></div><svg class="a" style="left:44.5px;top:359.7px" width="10.4" height="6.4" viewBox="0 0 10.4 6.4"><polyline points="0.6,1 5.2,5.0 9.8,1" fill="none" stroke="#969696" stroke-width="1.0" stroke-linecap="round" stroke-linejoin="round"/></svg><svg class="a" style="left:0;top:0;overflow:visible;" width="1" height="1"><circle cx="186.8" cy="362.3" r="6.8" fill="none" stroke="#262e30" stroke-width="1.2"/><g fill="#262e30"><circle cx="183.7" cy="362.3" r="0.9"/><circle cx="186.8" cy="362.3" r="0.9"/><circle cx="189.9" cy="362.3" r="0.9"/></g></svg><div class="a" style="left:221px;top:353px;width:20px;height:20px;background:#ffff00;"></div><div class="a" style="left:247px;top:348px;width:136px;height:30px;box-sizing:border-box;border:1px solid #d4d4d4;background:#fff;"></div><svg class="a" style="left:254.5px;top:359.7px" width="10.4" height="6.4" viewBox="0 0 10.4 6.4"><polyline points="0.6,1 5.2,5.0 9.8,1" fill="none" stroke="#969696" stroke-width="1.0" stroke-linecap="round" stroke-linejoin="round"/></svg><svg class="a" style="left:0;top:0;overflow:visible;" width="1" height="1"><circle cx="396.8" cy="362.3" r="6.8" fill="none" stroke="#262e30" stroke-width="1.2"/><g fill="#262e30"><circle cx="393.7" cy="362.3" r="0.9"/><circle cx="396.8" cy="362.3" r="0.9"/><circle cx="399.9" cy="362.3" r="0.9"/></g></svg><div class="a" style="left:11px;top:387px;width:20px;height:20px;background:#c12e1f;"></div><div class="a" style="left:37px;top:382px;width:136px;height:30px;box-sizing:border-box;border:1px solid #d4d4d4;background:#fff;"></div><svg class="a" style="left:44.5px;top:393.7px" width="10.4" height="6.4" viewBox="0 0 10.4 6.4"><polyline points="0.6,1 5.2,5.0 9.8,1" fill="none" stroke="#969696" stroke-width="1.0" stroke-linecap="round" stroke-linejoin="round"/></svg><svg class="a" style="left:0;top:0;overflow:visible;" width="1" height="1"><circle cx="186.8" cy="396.3" r="6.8" fill="none" stroke="#262e30" stroke-width="1.2"/><g fill="#262e30"><circle cx="183.7" cy="396.3" r="0.9"/><circle cx="186.8" cy="396.3" r="0.9"/><circle cx="189.9" cy="396.3" r="0.9"/></g></svg><div class="a" style="left:221px;top:387px;width:20px;height:20px;background:#fff;box-sizing:border-box;border:1px solid #262e30;"></div><div class="a" style="left:247px;top:382px;width:136px;height:30px;box-sizing:border-box;border:1px solid #d4d4d4;background:#fff;"></div><svg class="a" style="left:254.5px;top:393.7px" width="10.4" height="6.4" viewBox="0 0 10.4 6.4"><polyline points="0.6,1 5.2,5.0 9.8,1" fill="none" stroke="#969696" stroke-width="1.0" stroke-linecap="round" stroke-linejoin="round"/></svg><svg class="a" style="left:0;top:0;overflow:visible;" width="1" height="1"><circle cx="396.8" cy="396.3" r="6.8" fill="none" stroke="#262e30" stroke-width="1.2"/><g fill="#262e30"><circle cx="393.7" cy="396.3" r="0.9"/><circle cx="396.8" cy="396.3" r="0.9"/><circle cx="399.9" cy="396.3" r="0.9"/></g></svg><div class="a" style="left:0px;top:430px;width:421px;height:1px;background:#bdbdbd;"></div><div class="a" style="left:0px;top:431px;width:421px;height:30px;background:linear-gradient(#f8f8f8,#eeeeee);"></div><div class="a" style="left:0px;top:461px;width:421px;height:1px;background:#cdcdcd;"></div><svg class="a" style="left:0;top:0;overflow:visible;" width="1" height="1"><g fill="none" stroke="#5c6468" stroke-width="1.2" stroke-linejoin="round"><path d="M14.6,440 h11.8 l-3,4.4 h-11.8z"/><path d="M26.4,444 l-3,4.6 h-11.8 l1.2,-1.8" stroke="#4479fb"/><path d="M26.4,448.2 l-3,4.6 h-11.8 l1.2,-1.8"/></g></svg><div class="a" style="left:99px;top:435.6px;width:110px;height:20.8px;border-radius:10.4px;background:#dedede;"></div><div class="a" style="left:99px;top:435.6px;width:56.4px;height:20.8px;border-radius:10.4px;background:#4479fb;"></div><div class="a" style="left:324px;top:438px;width:27px;height:15.6px;border-radius:7.8px;background:#4479fb;"></div><div class="a" style="left:336.2px;top:438.9px;width:14px;height:14px;border-radius:50%;background:#fff;"></div><svg class="a" style="left:0;top:0;overflow:visible;" width="1" height="1"><g stroke="#262e30" stroke-width="1.3" stroke-linecap="round"><path d="M366.4,441.2 h9.4 M366.4,446 h9.4 M366.4,450.7 h9.4"/><path d="M362.6,441.2 h0.6 M362.6,446 h0.6 M362.6,450.7 h0.6"/></g></svg><svg class="a" style="left:0;top:0;overflow:visible;" width="1" height="1"><g fill="none" stroke="#262e30" stroke-width="1.2" stroke-linecap="round" stroke-linejoin="round"><path d="M391.6,452.4 l11.2,-13"/><path d="M391,441.6 h5.6 l-2,-2 M396.6,441.6 l-2,2"/><path d="M404,450 h-5.6 l2,-2 M398.4,450 l2,2"/></g></svg><svg class="a" style="left:0;top:0;overflow:visible" width="1" height="1"><g fill="none" stroke="#f0694a" stroke-width="1.1" stroke-linecap="round" stroke-linejoin="round"><path d="M17.78,492.84 A5.9,5.9 0 1 1 24.50,487.40"/><polyline points="22.20,485.40 24.50,488.00 26.50,485.10"/></g></svg><div class="a" style="left:37px;top:474px;width:284px;height:26px;box-sizing:border-box;border:1px solid #d4d4d4;background:#fff;"></div><svg class="a" style="left:44.5px;top:484.59999999999997px" width="10.4" height="6.4" viewBox="0 0 10.4 6.4"><polyline points="0.6,1 5.2,5.0 9.8,1" fill="none" stroke="#969696" stroke-width="1.0" stroke-linecap="round" stroke-linejoin="round"/></svg><svg class="a" style="left:0;top:0;overflow:visible;" width="1" height="1"><g fill="none" stroke="#262e30" stroke-width="1.05" stroke-linejoin="round"><path d="M335.4,481.6 h7.6 l3.4,3.4 v7.6 h-11z"/><path d="M337.6,481.8 v1.8 h3.6 v-1.8"/><path d="M337.4,492.4 v-3.4 h7 v3.4"/></g></svg><svg class="a" style="left:0;top:0;overflow:visible;" width="1" height="1"><g stroke="#262e30" stroke-width="1.05" stroke-linecap="round"><path d="M364.4,482.4 l9.2,9.2 M373.6,482.4 l-9.2,9.2"/></g></svg><svg class="a" style="left:0;top:0;overflow:visible;" width="1" height="1"><g fill="none" stroke="#262e30" stroke-width="1.05" stroke-linecap="round"><circle cx="395.4" cy="485.4" r="5.2"/><path d="M399.4,489.4 l5,5"/></g></svg><div class="a" style="left:257.4px;top:534px;width:92.4px;height:3px;background:#4479fb;border-radius:1.5px;"></div><div class="a" style="left:0px;top:537px;width:421px;height:1px;background:#cbcbcb;"></div><div class="a" style="left:405px;top:544px;width:16px;height:848px;background:#f0f0f0;"></div><div class="a" style="left:412px;top:561px;width:2px;height:495px;background:#5a5a5a;"></div>
<svg class="a" style="left:0;top:0;overflow:visible;" width="1" height="1"><path d="M11.9,555.3 H28 V570.4 H21.7 V561.2 H11.9 Z" fill="none" stroke="#262e30" stroke-width="1.2" stroke-linejoin="miter"/><rect x="12.8" y="562.4" width="6.4" height="8.2" fill="#3a4143"/><g stroke="#d8d8d8" stroke-width="0.8"><path d="M13.2,569.6 l5.6,-6.4 M13.2,566.2 l3,-3.4 M15.8,570.4 l3.2,-3.8"/></g></svg><div class="a" style="left:126px;top:562.5px;width:267.7px;height:1px;background:#e8e8e8;"></div><svg class="a" style="left:0;top:0;overflow:visible" width="1" height="1"><g fill="none" stroke="#f0694a" stroke-width="1.1" stroke-linecap="round" stroke-linejoin="round"><path d="M239.79,601.14 A5.8,5.8 0 1 1 246.40,595.80"/><polyline points="244.10,593.80 246.40,596.40 248.40,593.50"/></g></svg><svg class="a" style="left:252px;top:587px" width="16" height="16" viewBox="0 0 16 16"><rect width="16" height="16" rx="1.5" fill="#4479fb"/><polyline points="3.2,8 8.3,12.6 14,5.4" fill="none" stroke="#fff" stroke-width="1.15" stroke-linecap="round" stroke-linejoin="round"/></svg><div class="a" style="left:251px;top:612.4px;width:120px;height:25.4px;box-sizing:border-box;border:1px solid #d4d4d4;background:#fff;"></div><svg class="a" style="left:259px;top:622.8px" width="10.4" height="6.4" viewBox="0 0 10.4 6.4"><polyline points="0.6,1 5.2,5.0 9.8,1" fill="none" stroke="#969696" stroke-width="1.0" stroke-linecap="round" stroke-linejoin="round"/></svg><div class="a" style="left:251px;top:642.6px;width:120px;height:25.4px;box-sizing:border-box;border:1px solid #d4d4d4;background:#fff;"></div><svg class="a" style="left:259px;top:652.8px" width="10.4" height="6.4" viewBox="0 0 10.4 6.4"><polyline points="0.6,1 5.2,5.0 9.8,1" fill="none" stroke="#969696" stroke-width="1.0" stroke-linecap="round" stroke-linejoin="round"/></svg><div class="a" style="left:251px;top:681.2px;width:120px;height:25.4px;box-sizing:border-box;border:1px solid #d4d4d4;background:#fff;"></div><svg class="a" style="left:254px;top:684.2px" width="14" height="19.4" viewBox="0 0 14 19.4"><g fill="none" stroke="#9a9a9a" stroke-width="1" stroke-linecap="round" stroke-linejoin="round"><polyline points="4,5.699999999999999 7,2.6999999999999993 10,5.699999999999999"/><polyline points="4,13.7 7,16.7 10,13.7"/><line x1="1.5" y1="9.7" x2="12.5" y2="9.7" stroke="#e2e2e2"/></g></svg><div class="a" style="left:252px;top:725px;width:16px;height:16px;box-sizing:border-box;border:1px solid #c4c4c4;border-radius:2px;background:#fff;"></div><div class="a" style="left:252px;top:764px;width:16px;height:16px;box-sizing:border-box;border:1px solid #c4c4c4;border-radius:2px;background:#fff;"></div><svg class="a" style="left:252px;top:812px" width="16" height="16" viewBox="0 0 16 16"><rect width="16" height="16" rx="1.5" fill="#4479fb"/><polyline points="3.2,8 8.3,12.6 14,5.4" fill="none" stroke="#fff" stroke-width="1.15" stroke-linecap="round" stroke-linejoin="round"/></svg><svg class="a" style="left:0;top:0;overflow:visible;" width="1" height="1"><g fill="none" stroke="#8a9094" stroke-width="1.2"><rect x="13.2" y="866.6" width="13.6" height="9.6" rx="0.8"/></g><rect x="12.4" y="877.6" width="15.4" height="2.2" fill="#8a9094"/></svg><div class="a" style="left:117px;top:872.8px;width:276.7px;height:1px;background:#e8e8e8;"></div><div class="a" style="left:251px;top:892.2px;width:120px;height:25.4px;box-sizing:border-box;border:1px solid #d4d4d4;background:#fff;"></div><svg class="a" style="left:254px;top:895.2px" width="14" height="19.4" viewBox="0 0 14 19.4"><g fill="none" stroke="#9a9a9a" stroke-width="1" stroke-linecap="round" stroke-linejoin="round"><polyline points="4,5.699999999999999 7,2.6999999999999993 10,5.699999999999999"/><polyline points="4,13.7 7,16.7 10,13.7"/><line x1="1.5" y1="9.7" x2="12.5" y2="9.7" stroke="#e2e2e2"/></g></svg><svg class="a" style="left:0;top:0;overflow:visible;" width="1" height="1"><path d="M15.0,943.2 Q12.200000000000001,949.5 15.0,955.8000000000001" fill="none" stroke="#8a9296" stroke-width="1.1"/><path d="M18.599999999999998,943.8000000000001 Q16.5,949.5 18.599999999999998,955.2" fill="none" stroke="#8a9296" stroke-width="1.1"/><path d="M21.400000000000002,943.8000000000001 Q19.300000000000004,949.5 21.400000000000002,955.2" fill="none" stroke="#8a9296" stroke-width="1.1"/><path d="M24.2,943.8000000000001 Q22.1,949.5 24.2,955.2" fill="none" stroke="#8a9296" stroke-width="1.1"/><path d="M25.0,943.2 Q28.0,949.5 25.0,955.8000000000001" fill="none" stroke="#8a9296" stroke-width="1.1"/></svg><div class="a" style="left:213px;top:949px;width:180.7px;height:1px;background:#e8e8e8;"></div><div class="a" style="left:251px;top:977.4px;width:120px;height:25.4px;box-sizing:border-box;border:1px solid #d4d4d4;background:#fff;"></div><svg class="a" style="left:259px;top:987.8px" width="10.4" height="6.4" viewBox="0 0 10.4 6.4"><polyline points="0.6,1 5.2,5.0 9.8,1" fill="none" stroke="#969696" stroke-width="1.0" stroke-linecap="round" stroke-linejoin="round"/></svg><div class="a" style="left:251px;top:1025.2px;width:120px;height:25.4px;box-sizing:border-box;border:1px solid #d4d4d4;background:#fff;"></div><svg class="a" style="left:259px;top:1035.6000000000001px" width="10.4" height="6.4" viewBox="0 0 10.4 6.4"><polyline points="0.6,1 5.2,5.0 9.8,1" fill="none" stroke="#969696" stroke-width="1.0" stroke-linecap="round" stroke-linejoin="round"/></svg><svg class="a" style="left:0;top:0;overflow:visible" width="1" height="1"><path d="M16.94,1083.22 L17.76,1083.05 L18.60,1083.00 L19.44,1083.05 L20.26,1083.22 L20.39,1084.88 L21.03,1085.19 L21.62,1085.59 L23.13,1084.87 L23.68,1085.50 L24.14,1086.20 L24.51,1086.95 L24.78,1087.74 L23.41,1088.69 L23.46,1089.40 L23.41,1090.11 L24.78,1091.06 L24.51,1091.85 L24.14,1092.60 L23.68,1093.30 L23.13,1093.93 L21.62,1093.21 L21.03,1093.61 L20.39,1093.92 L20.26,1095.58 L19.44,1095.75 L18.60,1095.80 L17.76,1095.75 L16.94,1095.58 L16.81,1093.92 L16.17,1093.61 L15.58,1093.21 L14.07,1093.93 L13.52,1093.30 L13.06,1092.60 L12.69,1091.85 L12.42,1091.06 L13.79,1090.11 L13.74,1089.40 L13.79,1088.69 L12.42,1087.74 L12.69,1086.95 L13.06,1086.20 L13.52,1085.50 L14.07,1084.87 L15.58,1085.59 L16.17,1085.19 L16.81,1084.88Z" fill="none" stroke="#4c5458" stroke-width="1.1" stroke-linejoin="round"/><circle cx="18.6" cy="1089.4" r="1.98" fill="none" stroke="#4c5458" stroke-width="1.1"/></svg><svg class="a" style="left:0;top:0;overflow:visible" width="1" height="1"><path d="M23.62,1091.93 L24.10,1091.83 L24.60,1091.80 L25.10,1091.83 L25.58,1091.93 L25.66,1092.91 L26.04,1093.10 L26.39,1093.34 L27.29,1092.91 L27.61,1093.29 L27.89,1093.70 L28.11,1094.15 L28.27,1094.62 L27.46,1095.18 L27.49,1095.60 L27.46,1096.02 L28.27,1096.58 L28.11,1097.05 L27.89,1097.50 L27.61,1097.91 L27.29,1098.29 L26.39,1097.86 L26.04,1098.10 L25.66,1098.29 L25.58,1099.27 L25.10,1099.37 L24.60,1099.40 L24.10,1099.37 L23.62,1099.27 L23.54,1098.29 L23.16,1098.10 L22.81,1097.86 L21.91,1098.29 L21.59,1097.91 L21.31,1097.50 L21.09,1097.05 L20.93,1096.58 L21.74,1096.02 L21.71,1095.60 L21.74,1095.18 L20.93,1094.62 L21.09,1094.15 L21.31,1093.70 L21.59,1093.29 L21.91,1092.91 L22.81,1093.34 L23.16,1093.10 L23.54,1092.91Z" fill="none" stroke="#4c5458" stroke-width="1.0" stroke-linejoin="round"/><circle cx="24.6" cy="1095.6" r="1.18" fill="none" stroke="#4c5458" stroke-width="1.0"/></svg><div class="a" style="left:155px;top:1090.5px;width:238.7px;height:1px;background:#e8e8e8;"></div><div class="a" style="left:251px;top:1110.4px;width:120px;height:25.4px;box-sizing:border-box;border:1px solid #d4d4d4;background:#fff;"></div><div class="a" style="left:251px;top:1140.4px;width:120px;height:25.4px;box-sizing:border-box;border:1px solid #d4d4d4;background:#fff;"></div><div class="a" style="left:251px;top:1170.4px;width:120px;height:25.4px;box-sizing:border-box;border:1px solid #d4d4d4;background:#fff;"></div><svg class="a" style="left:254px;top:1173.4px" width="14" height="19.4" viewBox="0 0 14 19.4"><g fill="none" stroke="#9a9a9a" stroke-width="1" stroke-linecap="round" stroke-linejoin="round"><polyline points="4,5.699999999999999 7,2.6999999999999993 10,5.699999999999999"/><polyline points="4,13.7 7,16.7 10,13.7"/><line x1="1.5" y1="9.7" x2="12.5" y2="9.7" stroke="#e2e2e2"/></g></svg><div class="a" style="left:251px;top:1200.4px;width:120px;height:25.4px;box-sizing:border-box;border:1px solid #d4d4d4;background:#fff;"></div><div class="a" style="left:251px;top:1230.4px;width:120px;height:25.4px;box-sizing:border-box;border:1px solid #d4d4d4;background:#fff;"></div><div class="a" style="left:251px;top:1260.4px;width:120px;height:25.4px;box-sizing:border-box;border:1px solid #d4d4d4;background:#fff;"></div><svg class="a" style="left:259px;top:1270.8000000000002px" width="10.4" height="6.4" viewBox="0 0 10.4 6.4"><polyline points="0.6,1 5.2,5.0 9.8,1" fill="none" stroke="#969696" stroke-width="1.0" stroke-linecap="round" stroke-linejoin="round"/></svg><div class="a" style="left:251px;top:1290.4px;width:120px;height:25.4px;box-sizing:border-box;border:1px solid #d4d4d4;background:#fff;"></div><div class="a" style="left:251px;top:1320.4px;width:120px;height:25.4px;box-sizing:border-box;border:1px solid #d4d4d4;background:#fff;"></div><div class="a" style="left:251px;top:1350.4px;width:120px;height:25.4px;box-sizing:border-box;border:1px solid #d4d4d4;background:#fff;"></div><svg class="a" style="left:259px;top:1360.6px" width="10.4" height="6.4" viewBox="0 0 10.4 6.4"><polyline points="0.6,1 5.2,5.0 9.8,1" fill="none" stroke="#969696" stroke-width="1.0" stroke-linecap="round" stroke-linejoin="round"/></svg><div class="a" style="left:251px;top:1380.4px;width:120px;height:25.4px;box-sizing:border-box;border:1px solid #d4d4d4;background:#fff;"></div><svg class="a" style="left:259px;top:1390.8000000000002px" width="10.4" height="6.4" viewBox="0 0 10.4 6.4"><polyline points="0.6,1 5.2,5.0 9.8,1" fill="none" stroke="#969696" stroke-width="1.0" stroke-linecap="round" stroke-linejoin="round"/></svg><div class="a" style="left:0px;top:1390.5px;width:421px;height:1.5px;background:#8c8c8c;"></div><div class="a" style="left:0px;top:67px;width:1px;height:1325px;background:#a8a8a8;"></div>
<div class="a" style="left:0px;top:0px;width:2556px;height:31px;background:#0c0f10;"></div><div class="a" style="left:0px;top:1px;width:2556px;height:29px;background:#262e30;"></div><svg class="a" style="left:0;top:0;overflow:visible;" width="1" height="1"><g fill="#fff"><rect x="14" y="8.2" width="16" height="1.6"/><rect x="14" y="14.4" width="16" height="1.6"/><rect x="14" y="20.4" width="16" height="1.6"/></g></svg><svg class="a" style="left:85.5px;top:13.2px" width="11" height="6.6" viewBox="0 0 11 6.6"><polyline points="0.6,1 5.5,5.199999999999999 10.4,1" fill="none" stroke="#fff" stroke-width="1.4" stroke-linecap="round" stroke-linejoin="round"/></svg><div class="a" style="left:116px;top:4px;width:1px;height:23px;background:#4b5355;"></div><svg class="a" style="left:0;top:0;overflow:visible;" width="1" height="1"><g fill="none" stroke="#fff" stroke-width="1.5" stroke-linejoin="round"><path d="M141,9 a1.3,1.3 0 0 1 1.3,-1.3 h9 l4,4 v9 a1.3,1.3 0 0 1 -1.3,1.3 h-11.7 a1.3,1.3 0 0 1 -1.3,-1.3z"/></g><rect x="144" y="8" width="6.5" height="4" fill="#fff"/><rect x="143.2" y="16.5" width="9.8" height="5" fill="#fff"/></svg><svg class="a" style="left:0;top:0;overflow:visible;" width="1" height="1"><path d="M179.5,15 l7,-5.8 v3.4 c5,0 7.8,2.6 8.2,8 c-1.6,-2.6 -4,-3.6 -8.2,-3.5 v3.6z" fill="#8e9394"/></svg><svg class="a" style="left:0;top:0;overflow:visible;" width="1" height="1"><path d="M234,15 l-7,-5.8 v3.4 c-5,0 -7.8,2.6 -8.2,8 c1.6,-2.6 4,-3.6 8.2,-3.5 v3.6z" fill="#8e9394"/></svg><svg class="a" style="left:0;top:0;overflow:visible;" width="1" height="1"><g fill="none" stroke="#e8e8e8" stroke-width="1.2"><line x1="2469" y1="14.5" x2="2479" y2="14.5"/><rect x="2500.2" y="9.6" width="8.6" height="6.6" rx="1.2"/><rect x="2504.4" y="13" width="9.2" height="7" rx="1.2" fill="#262e30"/><line x1="2536" y1="11" x2="2544.4" y2="19.6"/><line x1="2544.4" y1="11" x2="2536" y2="19.6"/></g></svg><div class="a" style="left:0px;top:31px;width:2556px;height:36px;background:#3b4446;"></div><div class="a" style="left:427px;top:66px;width:2129px;height:1px;background:#2f3738;"></div><div class="a" style="left:177px;top:31px;width:218px;height:36px;background:#4479fb;"></div><svg class="a" style="left:0;top:0;overflow:visible;" width="1" height="1"><path d="M20.5,39.2 L30,47.6 L30,49 L27.6,49 L27.6,58.4 L22.8,58.4 L22.8,52 L18.2,52 L18.2,58.4 L13.4,58.4 L13.4,49 L11,49 L11,47.6 Z" fill="#fff"/></svg><svg class="a" style="left:0;top:0;overflow:visible;" width="1" height="1"><g fill="none" stroke="#dfe3e4" stroke-width="1.3" stroke-linejoin="round"><path d="M62,41.4 l7,3.6 v8 l-7,3.8 l-7,-3.8 v-8z"/><path d="M55,45 l7,3.6 l7,-3.6"/><path d="M62,48.6"/></g></svg><svg class="a" style="left:0;top:0;overflow:visible;" width="1" height="1"><g fill="none" stroke="#fff" stroke-width="1.3" stroke-linejoin="round"><path d="M197,41.6 l7.4,3.7 l-7.4,3.7 l-7.4,-3.7z"/><path d="M189.6,49.2 l7.4,3.7 l7.4,-3.7"/><path d="M189.6,52.9 l7.4,3.7 l7.4,-3.7"/></g></svg><svg class="a" style="left:0;top:0;overflow:visible;" width="1" height="1"><g fill="none" stroke="#dfe3e4" stroke-width="1.3" stroke-linejoin="round"><rect x="418.6" y="41.8" width="7.6" height="4.4" rx="0.8"/><path d="M422.4,46.2 v2.6 M422.4,48.8 h6"/><path d="M418.6,51.6 v4.8 h3.4"/><rect x="428.4" y="48.2" width="7.6" height="8.2" rx="1"/><path d="M430.6,41.8 h5.4 v3.4"/><path d="M431,52.4 h2.4"/></g></svg><svg class="a" style="left:0;top:0;overflow:visible;" width="1" height="1"><g fill="none" stroke="#dfe3e4" stroke-width="1.3" stroke-linejoin="round"><rect x="560.8" y="42.2" width="15.6" height="13.6" rx="1.6"/><path d="M564,46 h1.2 M567.2,46 h6 M564,49 h1.2 M567.2,49 h6 M564,52 h1.2 M567.2,52 h6"/></g></svg><svg class="a" style="left:0;top:0;overflow:visible;" width="1" height="1"><g fill="none" stroke="#dfe3e4" stroke-width="1.3" stroke-linejoin="round"><path d="M687,42.6 l1.8,1.4 l2.6,-0.4 l0.6,2.4 l2,1.4 l-1,2.2 l0.4,2.4 l-2.4,0.8 l-1.4,2 l-2.6,-0.8 l-2.6,0.8 l-1.4,-2 l-2.4,-0.8 l0.4,-2.4 l-1,-2.2 l2,-1.4 l0.6,-2.4 l2.6,0.4z"/><circle cx="687" cy="49" r="2"/></g></svg><svg class="a" style="left:0;top:0;overflow:visible;" width="1" height="1"><path d="M817.2,41.6 Q814.4,48.6 817.2,55.6" fill="none" stroke="#dfe3e4" stroke-width="1.1"/><path d="M820.8000000000001,42.2 Q818.7,48.6 820.8000000000001,55.0" fill="none" stroke="#dfe3e4" stroke-width="1.1"/><path d="M823.6,42.2 Q821.5,48.6 823.6,55.0" fill="none" stroke="#dfe3e4" stroke-width="1.1"/><path d="M826.4000000000001,42.2 Q824.3000000000001,48.6 826.4000000000001,55.0" fill="none" stroke="#dfe3e4" stroke-width="1.1"/><path d="M827.2,41.6 Q830.2,48.6 827.2,55.6" fill="none" stroke="#dfe3e4" stroke-width="1.1"/></svg><div class="a" style="left:2152px;top:37px;width:166px;height:24px;border-radius:12px;background:#6b6b6b;overflow:hidden;"></div><div class="a" style="left:2152px;top:37px;width:24.5px;height:24px;border-radius:12px 0 0 12px;background:#4479fb;"></div><div class="a" style="left:2176.5px;top:37px;width:1.6px;height:24px;background:#3b4446;"></div><svg class="a" style="left:2161.6px;top:47.4px" width="8.6" height="5.6" viewBox="0 0 8.6 5.6"><polyline points="0.6,1 4.3,4.2 8.0,1" fill="none" stroke="#fff" stroke-width="1.3" stroke-linecap="round" stroke-linejoin="round"/></svg><div class="a" style="left:2332px;top:37px;width:186px;height:24px;border-radius:12px;background:#4479fb;"></div><div class="a" style="left:2356.2px;top:37px;width:1.6px;height:24px;background:#3b4446;"></div><svg class="a" style="left:2341.6px;top:47.4px" width="8.6" height="5.6" viewBox="0 0 8.6 5.6"><polyline points="0.6,1 4.3,4.2 8.0,1" fill="none" stroke="#fff" stroke-width="1.3" stroke-linecap="round" stroke-linejoin="round"/></svg>
<span class="t" style="left:34.0px;top:9.0px;font-size:12px;color:#fff;letter-spacing:-0.13px;">Файл</span>
<span class="t" style="left:1306.0px;top:9.0px;font-size:12px;color:#fff;letter-spacing:-0.29px;">Без названия</span>
<span class="t" style="left:81.3px;top:40.6px;font-size:15px;color:#f2f2f2;letter-spacing:0.57px;">Подготовка</span>
<span class="t" style="left:216.3px;top:40.6px;font-size:15px;color:#fff;letter-spacing:0.38px;">Предпросмотр нарезки</span>
<span class="t" style="left:446.0px;top:40.6px;font-size:15px;color:#f2f2f2;letter-spacing:0.40px;">Принтер</span>
<span class="t" style="left:587.0px;top:40.6px;font-size:15px;color:#f2f2f2;letter-spacing:0.43px;">Проект</span>
<span class="t" style="left:706.2px;top:40.6px;font-size:15px;color:#f2f2f2;letter-spacing:0.26px;">Калибровка</span>
<span class="t" style="left:842.3px;top:40.6px;font-size:15px;color:#f2f2f2;letter-spacing:0.18px;">Профиль прутка</span>
<span class="t" style="left:2193.0px;top:40.6px;font-size:15px;color:#9c9c9c;letter-spacing:0.08px;">Нарезать стол</span>
<span class="t" style="left:2373.3px;top:40.6px;font-size:15px;color:#fff;letter-spacing:0.04px;">Распечатать стол</span>
<span class="t" style="left:37.5px;top:73.6px;font-size:15px;color:#262e30;letter-spacing:0.17px;">Профиль принтера</span>
<span class="t" style="left:33.0px;top:171.9px;font-size:15px;color:#262e30;letter-spacing:0.05px;">X-Max 4 0.4 nozzle - Ko...</span>
<span class="t" style="left:247.0px;top:171.9px;font-size:15px;color:#a3a3a3;letter-spacing:-0.10px;">Тексту...</span>
<span class="t" style="left:336.7px;top:163.0px;font-size:16px;color:#000;letter-spacing:-0.28px;">Sync info</span>
<span class="t" style="left:12.4px;top:221.5px;font-size:13px;color:#6e6e6e;letter-spacing:-0.20px;">Сопло</span>
<span class="t" style="left:12.4px;top:254.0px;font-size:15px;color:#262e30;letter-spacing:0.41px;">Диаметр</span>
<span class="t" style="left:102.0px;top:254.6px;font-size:15px;color:#262e30;letter-spacing:-0.05px;">0.4</span>
<span class="t" style="left:219.0px;top:254.0px;font-size:15px;color:#262e30;letter-spacing:0.60px;">Поток</span>
<span class="t" style="left:289.0px;top:254.6px;font-size:15px;color:#262e30;letter-spacing:0.17px;">Стандартный</span>
<span class="t" style="left:37.4px;top:303.6px;font-size:15px;color:#262e30;letter-spacing:0.39px;">Прутки</span>
<span class="t" style="left:116.2px;top:305.6px;font-size:12px;color:#8a8a8a;letter-spacing:-0.06px;">Продувка</span>
<span class="t" style="left:196.0px;top:303.2px;font-size:15px;color:#262e30;letter-spacing:0.17px;">Закрыть</span>
<span class="t" style="left:16.8px;top:354.8px;font-size:15px;color:#262e30;letter-spacing:0.06px;">1</span>
<span class="t" style="left:61.3px;top:355.0px;font-size:13px;color:#262e30;letter-spacing:-0.32px;">Generic PETG</span>
<span class="t" style="left:226.8px;top:354.8px;font-size:15px;color:#262e30;letter-spacing:0.06px;">2</span>
<span class="t" style="left:271.3px;top:355.0px;font-size:13px;color:#262e30;letter-spacing:-0.32px;">Generic PETG</span>
<span class="t" style="left:16.8px;top:388.8px;font-size:15px;color:#fff;letter-spacing:0.06px;">3</span>
<span class="t" style="left:61.3px;top:389.0px;font-size:13px;color:#262e30;letter-spacing:-0.32px;">Generic PETG</span>
<span class="t" style="left:226.8px;top:388.8px;font-size:15px;color:#262e30;letter-spacing:0.06px;">4</span>
<span class="t" style="left:271.3px;top:389.0px;font-size:13px;color:#262e30;letter-spacing:-0.32px;">Generic PETG</span>
<span class="t" style="left:37.4px;top:436.6px;font-size:15px;color:#262e30;letter-spacing:0.05px;">Процесс</span>
<span class="t" style="left:107.4px;top:438.7px;font-size:13px;color:#fff;letter-spacing:-0.77px;">Общие</span>
<span class="t" style="left:158.4px;top:438.7px;font-size:13px;color:#8e8e8e;letter-spacing:-0.48px;">Модели</span>
<span class="t" style="left:222.3px;top:436.6px;font-size:15px;color:#262e30;letter-spacing:0.07px;">Расширенный</span>
<span class="t" style="left:61.3px;top:478.8px;font-size:15px;color:#262e30;letter-spacing:0.17px;">* 0.20mm Standard @X-Max 4 - Ko...</span>
<span class="t" style="left:15.3px;top:514.6px;font-size:15px;color:#6e7578;letter-spacing:0.08px;">Качество</span>
<span class="t" style="left:92.5px;top:514.6px;font-size:15px;color:#6e7578;letter-spacing:0.19px;">Прочность</span>
<span class="t" style="left:181.6px;top:514.6px;font-size:15px;color:#6e7578;letter-spacing:0.08px;">Скорость</span>
<span class="t" style="left:260.6px;top:514.6px;font-size:15px;color:#f0694a;font-weight:700;letter-spacing:0.42px;">Поддержка</span>
<span class="t" style="left:359.6px;top:514.6px;font-size:15px;color:#6e7578;letter-spacing:0.13px;">Прочее</span>
<span class="t" style="left:34.5px;top:554.6px;font-size:15px;color:#262e30;font-weight:700;letter-spacing:0.40px;">Поддержка</span>
<span class="t" style="left:31.5px;top:586.6px;font-size:15px;color:#f0694a;letter-spacing:0.38px;">Включить поддержку</span>
<span class="t" style="left:31.5px;top:616.6px;font-size:15px;color:#262e30;letter-spacing:0.33px;">Тип</span>
<span class="t" style="left:275.2px;top:617.0px;font-size:15px;color:#262e30;letter-spacing:0.08px;">Древовидн...</span>
<span class="t" style="left:31.5px;top:646.6px;font-size:15px;color:#262e30;letter-spacing:-0.35px;">Стиль</span>
<span class="t" style="left:275.2px;top:647.0px;font-size:15px;color:#262e30;letter-spacing:-0.10px;">По умолча...</span>
<span class="t" style="left:31.5px;top:676.9px;font-size:15px;color:#262e30;letter-spacing:0.55px;">Пороговый угол</span>
<span class="t" style="left:31.5px;top:694.9px;font-size:15px;color:#262e30;letter-spacing:0.52px;">поддержки</span>
<span class="t" style="left:275.2px;top:685.6px;font-size:15px;color:#262e30;letter-spacing:0.31px;">30</span>
<span class="t" style="left:360.6px;top:685.7px;font-size:13px;color:#7c7c7c;letter-spacing:0.20px;">°</span>
<span class="t" style="left:31.5px;top:724.6px;font-size:15px;color:#262e30;letter-spacing:0.24px;">Поддержка только от стола</span>
<span class="t" style="left:31.5px;top:754.6px;font-size:15px;color:#262e30;letter-spacing:0.33px;">Поддержка только</span>
<span class="t" style="left:31.5px;top:772.6px;font-size:15px;color:#262e30;letter-spacing:0.20px;">критических областей</span>
<span class="t" style="left:31.5px;top:802.9px;font-size:15px;color:#262e30;letter-spacing:0.33px;">Игнорировать небольшие</span>
<span class="t" style="left:31.5px;top:820.9px;font-size:15px;color:#262e30;letter-spacing:0.04px;">нависания</span>
<span class="t" style="left:34.5px;top:864.9px;font-size:15px;color:#262e30;font-weight:700;letter-spacing:0.43px;">Подложка</span>
<span class="t" style="left:31.5px;top:896.9px;font-size:15px;color:#262e30;letter-spacing:0.11px;">Слоёв в подложке</span>
<span class="t" style="left:275.4px;top:896.9px;font-size:15px;color:#262e30;letter-spacing:0.26px;">0</span>
<span class="t" style="left:319.0px;top:899.5px;font-size:12px;color:#7c7c7c;letter-spacing:0.25px;">слой(-я)</span>
<span class="t" style="left:33.4px;top:941.1px;font-size:15px;color:#262e30;font-weight:700;letter-spacing:0.23px;">Пруток для поддержки</span>
<span class="t" style="left:31.5px;top:973.1px;font-size:15px;color:#262e30;letter-spacing:-0.06px;">Базовая</span>
<span class="t" style="left:31.5px;top:991.1px;font-size:15px;color:#262e30;letter-spacing:0.51px;">поддержка/подложка</span>
<span class="t" style="left:275.2px;top:982.0px;font-size:15px;color:#262e30;letter-spacing:-0.10px;">По умолча...</span>
<span class="t" style="left:31.5px;top:1020.6px;font-size:15px;color:#262e30;letter-spacing:0.03px;">Связующий слой</span>
<span class="t" style="left:31.5px;top:1038.6px;font-size:15px;color:#262e30;letter-spacing:0.64px;">поддержки/подложки</span>
<span class="t" style="left:275.2px;top:1029.8px;font-size:15px;color:#262e30;letter-spacing:-0.10px;">По умолча...</span>
<span class="t" style="left:34.5px;top:1082.6px;font-size:15px;color:#262e30;font-weight:700;letter-spacing:-0.24px;">Дополнительно</span>
<span class="t" style="left:31.5px;top:1114.6px;font-size:15px;color:#262e30;letter-spacing:0.18px;">Плотность первого слоя</span>
<span class="t" style="left:259.5px;top:1114.8px;font-size:15px;color:#262e30;letter-spacing:0.16px;">90</span>
<span class="t" style="left:352.4px;top:1117.7px;font-size:12px;color:#7c7c7c;letter-spacing:-1.20px;">%</span>
<span class="t" style="left:31.5px;top:1144.6px;font-size:15px;color:#262e30;letter-spacing:0.13px;">Расширение первого слоя</span>
<span class="t" style="left:259.5px;top:1144.8px;font-size:15px;color:#262e30;letter-spacing:0.33px;">-1</span>
<span class="t" style="left:345.5px;top:1147.7px;font-size:12px;color:#7c7c7c;letter-spacing:-0.40px;">мм</span>
<span class="t" style="left:31.5px;top:1174.6px;font-size:15px;color:#262e30;letter-spacing:0.40px;">Периметров поддержки</span>
<span class="t" style="left:275.0px;top:1174.8px;font-size:15px;color:#262e30;letter-spacing:0.26px;">0</span>
<span class="t" style="left:31.5px;top:1204.6px;font-size:15px;color:#262e30;letter-spacing:0.28px;">Зазор поддержки сверху</span>
<span class="t" style="left:259.5px;top:1204.8px;font-size:15px;color:#262e30;letter-spacing:0.05px;">0,2</span>
<span class="t" style="left:345.5px;top:1207.7px;font-size:12px;color:#7c7c7c;letter-spacing:-0.40px;">мм</span>
<span class="t" style="left:31.5px;top:1234.6px;font-size:15px;color:#262e30;letter-spacing:0.36px;">Зазор поддержки снизу</span>
<span class="t" style="left:259.5px;top:1234.8px;font-size:15px;color:#262e30;letter-spacing:0.05px;">0,2</span>
<span class="t" style="left:345.5px;top:1237.7px;font-size:12px;color:#7c7c7c;letter-spacing:-0.40px;">мм</span>
<span class="t" style="left:31.5px;top:1264.6px;font-size:15px;color:#262e30;letter-spacing:0.45px;">Шаблон поддержки</span>
<span class="t" style="left:275.2px;top:1265.0px;font-size:15px;color:#262e30;letter-spacing:-0.10px;">По умолча...</span>
<span class="t" style="left:31.5px;top:1294.6px;font-size:15px;color:#262e30;letter-spacing:0.32px;">Плотность поддержки</span>
<span class="t" style="left:259.5px;top:1294.8px;font-size:15px;color:#262e30;letter-spacing:0.05px;">2,5</span>
<span class="t" style="left:345.5px;top:1297.7px;font-size:12px;color:#7c7c7c;letter-spacing:-0.40px;">мм</span>
<span class="t" style="left:31.5px;top:1324.6px;font-size:15px;color:#262e30;letter-spacing:0.33px;">Угол шаблона поддержки</span>
<span class="t" style="left:259.5px;top:1324.8px;font-size:15px;color:#262e30;letter-spacing:0.16px;">0</span>
<span class="t" style="left:357.4px;top:1324.5px;font-size:13px;color:#7c7c7c;letter-spacing:0.20px;">°</span>
<span class="t" style="left:31.5px;top:1354.6px;font-size:15px;color:#262e30;letter-spacing:-0.07px;">Связующих слоёв сверху</span>
<span class="t" style="left:275.0px;top:1354.8px;font-size:15px;color:#262e30;letter-spacing:0.26px;">2</span>
<span class="t" style="left:317.2px;top:1357.7px;font-size:12px;color:#7c7c7c;letter-spacing:0.23px;">слой(-я)</span>
<span class="t" style="left:31.5px;top:1384.6px;font-size:15px;color:#262e30;letter-spacing:0.10px;">Шаблон связующего слоя</span>
<span class="t" style="left:275.2px;top:1385.0px;font-size:15px;color:#262e30;letter-spacing:-0.10px;">По умолча...</span>
<span class="t" style="left:2107.5px;top:75.5px;font-size:13px;color:#fff;font-weight:700;letter-spacing:-0.08px;">Результат нарезки</span>
<span class="t" style="left:2107.5px;top:102.9px;font-size:13px;color:#fff;font-weight:700;letter-spacing:-0.21px;">Цветовая схема</span>
<span class="t" style="left:2241.2px;top:105.7px;font-size:13px;color:#d6d6d6;letter-spacing:0.03px;">Профиль прутка</span>
<span class="t" style="left:2107.5px;top:127.7px;font-size:13px;color:#fff;font-weight:700;letter-spacing:-0.20px;">Профиль прутка</span>
<span class="t" style="left:2220.5px;top:127.7px;font-size:13px;color:#fff;font-weight:700;letter-spacing:-0.21px;">Модели</span>
<span class="t" style="left:2290.5px;top:127.7px;font-size:13px;color:#fff;font-weight:700;letter-spacing:0.21px;">Поддержка</span>
<span class="t" style="left:2377.4px;top:127.7px;font-size:13px;color:#fff;font-weight:700;letter-spacing:-0.39px;">Всего</span>
<span class="t" style="left:2125.6px;top:150.6px;font-size:13px;color:#f2f2f2;letter-spacing:-1.20px;">1</span>
<span class="t" style="left:2220.5px;top:150.6px;font-size:13px;color:#f2f2f2;letter-spacing:-0.18px;">252,02 m</span>
<span class="t" style="left:2220.5px;top:165.5px;font-size:13px;color:#f2f2f2;letter-spacing:-0.08px;">769,86 g</span>
<span class="t" style="left:2290.5px;top:150.6px;font-size:13px;color:#f2f2f2;letter-spacing:-0.17px;">20,13 m</span>
<span class="t" style="left:2290.5px;top:165.5px;font-size:13px;color:#f2f2f2;letter-spacing:-0.12px;">61,50 g</span>
<span class="t" style="left:2377.4px;top:150.6px;font-size:13px;color:#f2f2f2;letter-spacing:-0.16px;">272,16 m</span>
<span class="t" style="left:2377.4px;top:165.5px;font-size:13px;color:#f2f2f2;letter-spacing:-0.06px;">831,36 g</span>
<span class="t" style="left:2107.5px;top:186.6px;font-size:13px;color:#f2f2f2;letter-spacing:0.07px;">Кол-во смен материала:</span>
<span class="t" style="left:2265.6px;top:186.6px;font-size:13px;color:#f2f2f2;letter-spacing:-1.20px;">1</span>
<span class="t" style="left:2107.5px;top:205.3px;font-size:13px;color:#f2f2f2;letter-spacing:-0.19px;">Стоимость:</span>
<span class="t" style="left:2183.3px;top:205.3px;font-size:13px;color:#f2f2f2;letter-spacing:-0.25px;">0,00</span>
<span class="t" style="left:2107.5px;top:233.4px;font-size:13px;color:#fff;font-weight:700;letter-spacing:-0.14px;">Оценка времени</span>
<span class="t" style="left:2107.4px;top:256.8px;font-size:13px;color:#f2f2f2;letter-spacing:0.20px;">Время подготовки:</span>
<span class="t" style="left:2265.3px;top:256.8px;font-size:13px;color:#f2f2f2;letter-spacing:-0.17px;">3m41s</span>
<span class="t" style="left:2107.4px;top:275.5px;font-size:13px;color:#f2f2f2;letter-spacing:-0.03px;">Расчётное время печати:</span>
<span class="t" style="left:2265.3px;top:275.5px;font-size:13px;color:#f2f2f2;letter-spacing:0.10px;">1d4h18m</span>
<span class="t" style="left:2107.4px;top:294.6px;font-size:13px;color:#f2f2f2;letter-spacing:-0.05px;">Общее время печати:</span>
<span class="t" style="left:2265.3px;top:294.6px;font-size:13px;color:#f2f2f2;letter-spacing:0.10px;">1d4h22m</span>
<span class="t" style="left:2107.4px;top:317.5px;font-size:13px;color:#fff;font-weight:700;letter-spacing:-0.12px;">Параметры</span>
<span class="t" style="left:2265.3px;top:317.5px;font-size:13px;color:#fff;font-weight:700;letter-spacing:-0.39px;">Видимость</span>
<span class="t" style="left:2125.3px;top:340.7px;font-size:13px;color:#f2f2f2;letter-spacing:-0.04px;">Перемещения</span>
<span class="t" style="left:2125.3px;top:361.6px;font-size:13px;color:#f2f2f2;letter-spacing:-0.05px;">Откат</span>
<span class="t" style="left:2125.3px;top:382.6px;font-size:13px;color:#f2f2f2;letter-spacing:0.10px;">Подача</span>
<span class="t" style="left:2125.3px;top:403.5px;font-size:13px;color:#f2f2f2;letter-spacing:-0.02px;">Очистка</span>
<span class="t" style="left:2125.3px;top:424.4px;font-size:13px;color:#f2f2f2;letter-spacing:0.04px;">Швы</span>
<span class="t" style="left:2467.0px;top:204.7px;font-size:12px;color:#4479fb;letter-spacing:0.16px;">801</span>
<span class="t" style="left:2460.7px;top:219.5px;font-size:12px;color:#4479fb;letter-spacing:0.33px;">160,03</span>
<span class="t" style="left:2485.0px;top:1226.3px;font-size:12px;color:#4479fb;letter-spacing:-0.69px;">1</span>
<span class="t" style="left:2474.6px;top:1241.4px;font-size:12px;color:#4479fb;letter-spacing:0.26px;">0,20</span>
<span class="t" style="left:2093.6px;top:1352.3px;font-size:12px;color:#4479fb;letter-spacing:-0.28px;">12</span>
<span class="t" style="left:433.4px;top:1312.6px;font-size:15px;color:#6fbf6f;letter-spacing:0.70px;">y</span>
<span class="t" style="left:469.2px;top:1320.2px;font-size:14px;color:#7f7fd0;letter-spacing:0.80px;">z</span>
<span class="t" style="left:545.6px;top:1344.6px;font-size:15px;color:#c87373;letter-spacing:-0.10px;">x</span>
<span class="t" style="left:470.0px;top:1301.9px;font-size:12px;color:#3a3a3a;transform:rotate(-19deg);transform-origin:50% 50%;">Сверху</span>
<span class="t" style="left:479.5px;top:1346.4px;font-size:10px;color:#3a3a3a;letter-spacing:0.9px;transform:rotate(-19deg) skewX(-18deg);transform-origin:50% 50%;">Спереди</span>
<span class="t" style="left:450.0px;top:113.2px;font-size:15px;color:#f0f0f0;letter-spacing:-1.20px;">1</span>
</body></html>
